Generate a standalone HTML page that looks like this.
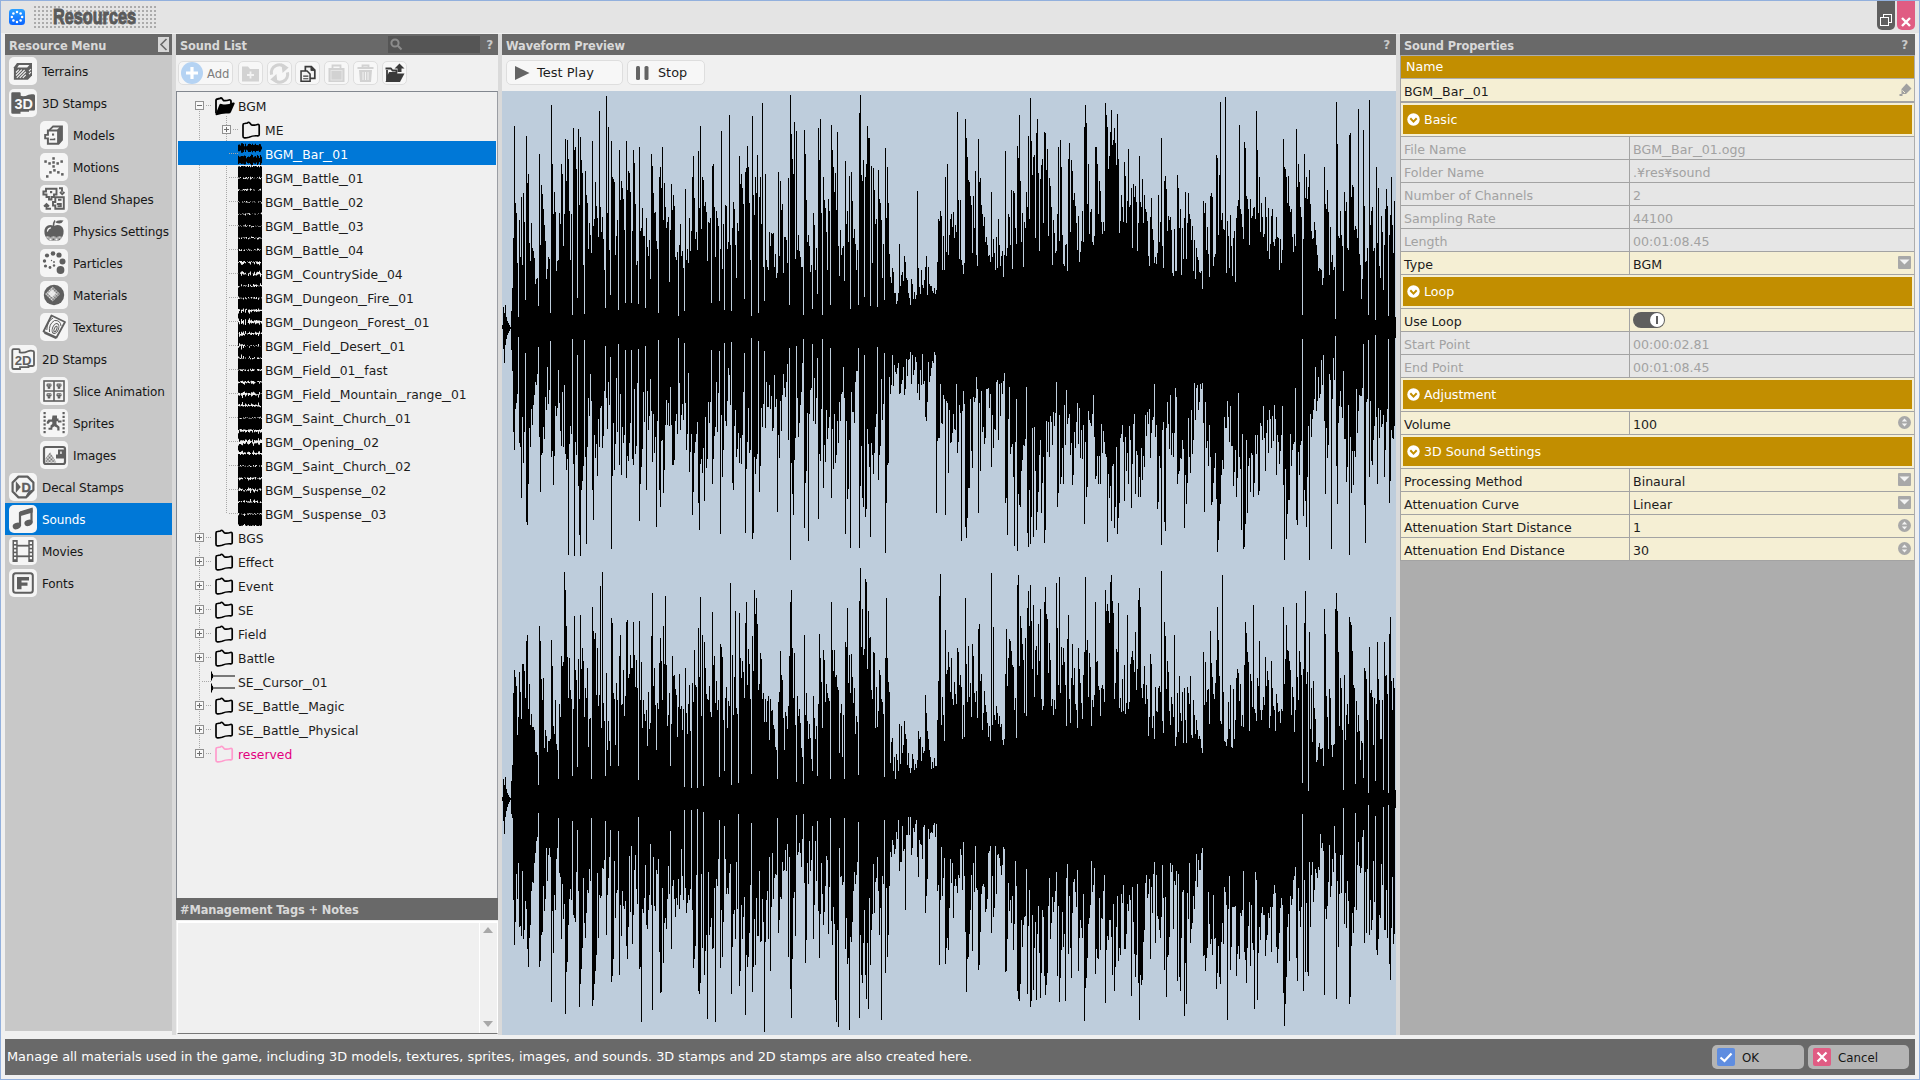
<!DOCTYPE html>
<html lang="en"><head><meta charset="utf-8"><title>Resources</title>
<style>
*{box-sizing:border-box;margin:0;padding:0}
html,body{width:1920px;height:1080px;overflow:hidden;background:#f0f0f0}
body{position:relative;font-family:"DejaVu Sans","Liberation Sans",sans-serif;font-size:12.6px;color:#1e1e1e;line-height:1}
.abs{position:absolute}
#win{position:absolute;left:0;top:0;width:1920px;height:1080px;border:1px solid #92b0dd;pointer-events:none;z-index:50}
#titlebar{position:absolute;left:1px;top:1px;width:1918px;height:32px;background:#e4e4e4}
.hdr{position:absolute;height:21px;background:#696969;color:#d9d9d9;font-weight:bold;font-size:11.4px;line-height:24px;padding-left:4px;white-space:nowrap;letter-spacing:-.1px;overflow:hidden}
u{text-decoration:none;display:inline-block;width:.72em;transform:scaleX(1.42);transform-origin:0 50%}
.hdr .q{position:absolute;right:4px;top:-1px;font-size:12px;color:#c8c8c8}
.split{position:absolute;background:#dadada}
</style>
</head><body>
<div id="titlebar"></div>
<style>
#appicon{position:absolute;left:9px;top:9px;width:16px;height:16px}
#ttl{position:absolute;left:34px;top:6px;width:123px;height:23px;background-image:radial-gradient(circle at 1px 1px,#ababab 0,#ababab 1px,rgba(171,171,171,0) 1.3px);background-size:4px 4px;background-position:0 0}
#ttl span{position:absolute;left:19px;top:-1px;font-family:"Liberation Sans","DejaVu Sans",sans-serif;font-weight:bold;font-size:21.5px;line-height:24px;color:#5a5a5a;transform:scaleX(.755);transform-origin:0 0;white-space:nowrap;-webkit-text-stroke:1px #5a5a5a;letter-spacing:0}
.wbtn{position:absolute;top:1px;height:29px;width:18px;border-radius:0 0 5px 5px}
</style>
<svg id="appicon" viewBox="0 0 16 16"><defs><linearGradient id="ag" x1="0" y1="0" x2="0" y2="1"><stop offset="0" stop-color="#2aa0ff"/><stop offset="1" stop-color="#0a64ff"/></linearGradient></defs><rect width="16" height="16" rx="3.5" fill="url(#ag)"/><g fill="#fff"><circle cx="8" cy="2.9" r="1.25"/><circle cx="11.6" cy="4.4" r="1.25"/><circle cx="13.1" cy="8" r="1.25"/><circle cx="11.6" cy="11.6" r="1.25"/><circle cx="8" cy="13.1" r="1.25"/><circle cx="4.4" cy="11.6" r="1.25"/><circle cx="2.9" cy="8" r="1.25"/><circle cx="4.4" cy="4.4" r="1.25"/></g></svg>
<div id="ttl"><span>Resources</span></div>
<div class="wbtn" style="left:1877px;background:#5f5f5f"><svg class="abs" style="left:2px;top:12px" width="14" height="14" viewBox="0 0 14 14" fill="none" stroke="#fff" stroke-width="1"><rect x="4.5" y="1.5" width="8" height="8" fill="#5f5f5f"/><rect x="1.5" y="4.5" width="8" height="8" fill="#5f5f5f"/></svg></div>
<div class="wbtn" style="left:1897px;background:#e05c83"><svg class="abs" style="left:4px;top:16px" width="10" height="10" viewBox="0 0 10 10" stroke="#fff" stroke-width="2.4"><path d="M1 1L9 9M9 1L1 9"/></svg></div>
<style>
#left{position:absolute;left:5px;top:55px;width:167px;height:976px;background:#c8c8c8}
.mi{position:absolute;left:0;width:167px;height:32px}
.mi.sel{background:#0078d7;color:#fff}
.mi .ib{position:absolute;top:2px;width:28px;height:28px;border-radius:5px;background:#f5f5f5}
.mi .ib svg{position:absolute;left:0;top:0;width:28px;height:28px}
.mi .tx{position:absolute;top:0;line-height:35px;white-space:nowrap;color:#161616;font-size:12px;letter-spacing:-.1px}
.mi.sel .tx{color:#fff}
</style>
<div class="hdr" style="left:5px;top:34px;width:167px">Resource Menu<div class="abs" style="left:153px;top:3px;width:11px;height:15px;background:#d7d7d7"><svg class="abs" style="left:0;top:0" width="11" height="15" viewBox="0 0 11 15" fill="none" stroke="#696969" stroke-width="1.6"><path d="M8.5 2L3 7.5L8.5 13"/></svg></div></div>
<div id="left">
<div class="mi" style="top:0px"><div class="ib" style="left:4px"><svg viewBox="0 0 28 28"><path d="M4.9 10.2L8 6.1H23V18.6L18.9 22.7H4.9Z" fill="#5f5f5f"/><path d="M10 8.1H20.4L18.2 10.6H8.2Z" fill="#f5f5f5"/><g stroke="#f5f5f5" stroke-width="1.1"><path d="M7 15.500l2.800-2.800M7 18.500l5.800-5.800M7.800 20.800l7.800-7.800M10.800 20.800l6-6M13.800 20.800l3-3M20 14.200l2-2.200M20 17.200l2-2.200"/></g></svg></div><span class="tx" style="left:37px">Terrains</span></div>
<div class="mi" style="top:32px"><div class="ib" style="left:4px"><svg viewBox="0 0 28 28"><path d="M2.300 4.500Q2.300 3.200 3.600 3.200H10.500Q11.700 3.200 11.700 4.400V6.800Q15 8 19.500 5.700Q21 5 24.500 5.300Q26 5.300 26 6.800V20.300Q26 21.500 24.800 21.500H20V22.700H11.500V24.800H3.600Q2.300 24.800 2.300 23.500Z" fill="#5f5f5f"/><text x="5.500" y="20.300" textLength="18.400" lengthAdjust="spacingAndGlyphs" font-family="Liberation Sans,DejaVu Sans,sans-serif" font-weight="bold" font-size="15.500" fill="#f8f8f8">3D</text></svg></div><span class="tx" style="left:37px">3D Stamps</span></div>
<div class="mi" style="top:64px"><div class="ib" style="left:35px"><svg viewBox="0 0 28 28"><path d="M8.700 8.600L12.700 4.600H22.900V19.200L18.900 23.700H6.900V18.200H4.200V13H6.900V8.600Z" fill="#5f5f5f"/><path d="M8.900 10.500H17.100V21.800H8.900V16.500H6.100V14.800H8.900Z" fill="#f5f5f5"/><path d="M11 8.600L13.400 6.400H19.300L17.100 8.600Z" fill="#f5f5f5"/><rect x="12" y="12.500" width="2.100" height="2.100" fill="#5f5f5f"/><path d="M9.800 18.500H14.500V17.200" fill="none" stroke="#5f5f5f" stroke-width="1.500"/></svg></div><span class="tx" style="left:68px">Models</span></div>
<div class="mi" style="top:96px"><div class="ib" style="left:35px"><svg viewBox="0 0 28 28"><g fill="#5f5f5f"><rect x="12.3" y="4.2" width="2.5" height="2.5"/><rect x="4.3" y="7.3" width="2.5" height="2.5"/><rect x="20.4" y="7.3" width="2.5" height="2.5"/><rect x="8.3" y="9.2" width="2.5" height="2.5"/><rect x="12.3" y="8.2" width="2.5" height="2.5"/><rect x="16.4" y="9.2" width="2.5" height="2.5"/><rect x="12.3" y="12.2" width="2.5" height="2.5"/><rect x="13.2" y="16.1" width="2.5" height="2.5"/><rect x="9.2" y="18.1" width="2.5" height="2.5"/><rect x="17.1" y="18.1" width="2.5" height="2.5"/><rect x="6.0" y="22.2" width="2.5" height="2.5"/><rect x="21.1" y="20.1" width="2.5" height="2.5"/></g></svg></div><span class="tx" style="left:68px">Motions</span></div>
<div class="mi" style="top:128px"><div class="ib" style="left:35px"><svg viewBox="0 0 28 28"><g fill="none" stroke="#5f5f5f" stroke-width="1.9" stroke-linejoin="miter"><path d="M6 3.800H16.500V9.500H14V12H11.500V14.500H9V12H6.500V9.500H3.400V6.500H6Z"/><path d="M15.300 12.200H23.800V23.700H15.300V20.500H13V17H15.300Z"/><path d="M18 14.800h3.500M16.800 19h4v2.200h-3.300"/><path d="M19 3.300h3v3.500M20 7l2.200 2.200 2.200-2.200"/><path d="M11 23.700H6.500V20.800M4 21.500L6.500 19l2.500 2.500"/></g><rect x="10" y="6" width="2.200" height="2.200" fill="#5f5f5f"/></svg></div><span class="tx" style="left:68px">Blend Shapes</span></div>
<div class="mi" style="top:160px"><div class="ib" style="left:35px"><svg viewBox="0 0 28 28"><defs><pattern id="chk" width="1.2" height="1.2" patternUnits="userSpaceOnUse"><rect width=".6" height=".6" fill="#f5f5f5"/><rect x=".6" y=".6" width=".6" height=".6" fill="#f5f5f5"/></pattern><clipPath id="apc"><path d="M14 9Q9 6.5 5.8 10Q3 14 5.5 19.5Q8 24 11.5 24Q14 23.2 16.5 24Q20 24 22.5 19.5Q25 14 22.2 10Q19 6.5 14 9Z"/></clipPath></defs><path d="M14 9Q9 6.5 5.8 10Q3 14 5.5 19.5Q8 24 11.5 24Q14 23.2 16.5 24Q20 24 22.5 19.5Q25 14 22.2 10Q19 6.5 14 9Z" fill="#5f5f5f"/><rect x="3" y="19.5" width="22" height="5" fill="url(#chk)" clip-path="url(#apc)"/><path d="M13.5 9Q13.2 6 15 3.5" fill="none" stroke="#5f5f5f" stroke-width="1.5"/><path d="M15.5 5.5Q17 2.5 23.5 3.5Q21.5 8 15.5 5.5Z" fill="#5f5f5f"/><path d="M7.5 14Q7.8 11.5 10.5 10.8" fill="none" stroke="#f5f5f5" stroke-width="1.3" stroke-linecap="round"/></svg></div><span class="tx" style="left:68px">Physics Settings</span></div>
<div class="mi" style="top:192px"><div class="ib" style="left:35px"><svg viewBox="0 0 28 28"><g fill="#5f5f5f"><circle cx="20.5" cy="21" r="3.9"/><circle cx="22.5" cy="12.5" r="3"/><circle cx="19" cy="6" r="2.6"/><circle cx="13" cy="4.5" r="2.3"/><circle cx="7" cy="6.5" r="2.1"/><circle cx="4.5" cy="12" r="1.7"/><circle cx="5.5" cy="17" r="1.6"/><circle cx="10" cy="18.5" r="1.4"/><circle cx="14" cy="16.5" r="1.2"/><circle cx="14" cy="13" r=".9"/><circle cx="11.5" cy="11.5" r=".7"/></g></svg></div><span class="tx" style="left:68px">Particles</span></div>
<div class="mi" style="top:224px"><div class="ib" style="left:35px"><svg viewBox="0 0 28 28"><defs><pattern id="chk2" width="1.4" height="1.4" patternUnits="userSpaceOnUse"><rect width=".7" height=".7" fill="#f5f5f5"/><rect x=".7" y=".7" width=".7" height=".7" fill="#f5f5f5"/></pattern></defs><circle cx="14" cy="14" r="10.200" fill="#5f5f5f"/><path d="M12.500 5.500L20 13L12.500 20.500L5 13Z" fill="url(#chk2)"/><path d="M12 8.500L16 12.500L12 16.500L8 12.500Z" fill="#f5f5f5" opacity=".85"/></svg></div><span class="tx" style="left:68px">Materials</span></div>
<div class="mi" style="top:256px"><div class="ib" style="left:35px"><svg viewBox="0 0 28 28"><g fill="none" stroke="#5f5f5f"><path d="M11.5 2.5L25 9L16.5 24.5L3.5 18.5Z" stroke-width="1.8" stroke-linejoin="round"/><path d="M4.5 19.8L16.2 25.2" stroke-width="2"/><g stroke-width="1"><ellipse cx="15.5" cy="16" rx="1.2" ry="3" transform="rotate(22 15.5 16)"/><ellipse cx="15.5" cy="15.5" rx="3" ry="5.2" transform="rotate(22 15.5 15.5)"/><path d="M9.5 19Q8.5 11 14.5 7.5Q20.5 7 21 13"/><path d="M6.8 17Q7 8.5 13 5"/></g></g></svg></div><span class="tx" style="left:68px">Textures</span></div>
<div class="mi" style="top:288px"><div class="ib" style="left:4px"><svg viewBox="0 0 28 28"><path d="M3.300 5.500Q3.300 4.200 4.600 4.200H9.500Q10.700 4.200 10.700 5.400V7.300Q14.500 8.500 19 6.200Q20.500 5.500 23.500 5.800Q25 5.800 25 7.300V19.800Q25 21 23.800 21H19.500V22.200H11V24H4.600Q3.300 24 3.300 22.700Z" fill="none" stroke="#5f5f5f" stroke-width="1.800"/><text x="5.800" y="20" textLength="16.800" lengthAdjust="spacingAndGlyphs" font-family="Liberation Sans,DejaVu Sans,sans-serif" font-weight="bold" font-size="13" fill="#5f5f5f">2D</text></svg></div><span class="tx" style="left:37px">2D Stamps</span></div>
<div class="mi" style="top:320px"><div class="ib" style="left:35px"><svg viewBox="0 0 28 28"><g fill="none" stroke="#5f5f5f" stroke-width="1.6"><rect x="4" y="4" width="20" height="20"/><path d="M14 4V24M4 14H24"/></g><g fill="#5f5f5f"><rect x="6.5" y="6.5" width="5" height="3.2" rx="1.2"/><rect x="7.7" y="9.5" width="2.6" height="2.3"/><rect x="16.5" y="6.5" width="5" height="3.2" rx="1.2"/><rect x="17.7" y="9.5" width="2.6" height="2.3"/><rect x="6.5" y="16.2" width="5" height="3.2" rx="1.2"/><rect x="7.7" y="19.2" width="2.6" height="2.3"/><rect x="16.5" y="16.2" width="5" height="3.2" rx="1.2"/><rect x="17.7" y="19.2" width="2.6" height="2.3"/></g><g fill="#f5f5f5"><rect x="7.7" y="7.5" width="0.9" height="0.9"/><rect x="9.7" y="7.5" width="0.9" height="0.9"/><rect x="17.7" y="7.5" width="0.9" height="0.9"/><rect x="19.7" y="7.5" width="0.9" height="0.9"/><rect x="7.7" y="17.2" width="0.9" height="0.9"/><rect x="9.7" y="17.2" width="0.9" height="0.9"/><rect x="17.7" y="17.2" width="0.9" height="0.9"/><rect x="19.7" y="17.2" width="0.9" height="0.9"/></g></svg></div><span class="tx" style="left:68px">Slice Animation</span></div>
<div class="mi" style="top:352px"><div class="ib" style="left:35px"><svg viewBox="0 0 28 28"><g fill="#5f5f5f"><rect x="3.5" y="3" width="2.2" height="2.2"/><rect x="3.5" y="6.8" width="2.2" height="2.2"/><rect x="3.5" y="10.6" width="2.2" height="2.2"/><rect x="3.5" y="14.4" width="2.2" height="2.2"/><rect x="3.5" y="18.2" width="2.2" height="2.2"/><rect x="3.5" y="22" width="2.2" height="2.2"/><rect x="22.5" y="3" width="2.2" height="2.2"/><rect x="22.5" y="6.8" width="2.2" height="2.2"/><rect x="22.5" y="10.6" width="2.2" height="2.2"/><rect x="22.5" y="14.4" width="2.2" height="2.2"/><rect x="22.5" y="18.2" width="2.2" height="2.2"/><rect x="22.5" y="22" width="2.2" height="2.2"/></g><path d="M12.5 6.5h4.5v3h1.5v2h3v2h-3.5v-1.2h-1.5v3l3 2.5v3.7h-2.2v-2.7l-3-1.5-2 1.5v2h-3.8v-2h2v-2.2l1.8-1.6v-2.2h-2.2l-1.5 2h-1.8v-2l1.6-2.2h3.5z" fill="#5f5f5f"/></svg></div><span class="tx" style="left:68px">Sprites</span></div>
<div class="mi" style="top:384px"><div class="ib" style="left:35px"><svg viewBox="0 0 28 28"><defs><pattern id="chk3" width="1.4" height="1.4" patternUnits="userSpaceOnUse"><rect width=".7" height=".7" fill="#5f5f5f"/><rect x=".7" y=".7" width=".7" height=".7" fill="#5f5f5f"/></pattern></defs><rect x="4" y="6" width="21" height="17" rx="2" fill="none" stroke="#5f5f5f" stroke-width="2.2"/><path d="M5.5 21.5V17.5L10 11L16.5 21.5Z" fill="url(#chk3)"/><path d="M18 8.5h6v9h-8v-4h2z" fill="#5f5f5f"/><rect x="20.2" y="10.5" width="1.5" height="2.4" fill="#f5f5f5"/></svg></div><span class="tx" style="left:68px">Images</span></div>
<div class="mi" style="top:416px"><div class="ib" style="left:4px"><svg viewBox="0 0 28 28"><path d="M9.500 3.600H18.500L24.400 9.500V17L17 24.400H9.500L3.600 18.500V9.500Z" fill="none" stroke="#5f5f5f" stroke-width="2.200" stroke-linejoin="round"/><path d="M24 17.500Q19.500 18 18 23.800" fill="none" stroke="#5f5f5f" stroke-width="2.200"/><path d="M6.800 8L11.800 14L6.800 20Z" fill="#5f5f5f"/><text x="17.200" y="18.600" text-anchor="middle" font-family="Liberation Sans,DejaVu Sans,sans-serif" font-weight="bold" font-size="13" fill="#5f5f5f" stroke="#5f5f5f" stroke-width=".4">D</text></svg></div><span class="tx" style="left:37px">Decal Stamps</span></div>
<div class="mi sel" style="top:448px"><div class="ib" style="left:4px"><svg viewBox="0 0 28 28"><path d="M11 7.5L22.5 4V17.5" fill="none" stroke="#5f5f5f" stroke-width="2.2"/><path d="M11 7.5V21" stroke="#5f5f5f" stroke-width="2.2" fill="none"/><path d="M10 7.2L23.6 3.2V7.6L10 11.6Z" fill="#5f5f5f"/><ellipse cx="7.8" cy="21" rx="4.2" ry="3.1" transform="rotate(-20 7.8 21)" fill="#5f5f5f"/><ellipse cx="19.5" cy="17.8" rx="4.2" ry="3.1" transform="rotate(-20 19.5 17.8)" fill="#5f5f5f"/></svg></div><span class="tx" style="left:37px">Sounds</span></div>
<div class="mi" style="top:480px"><div class="ib" style="left:4px"><svg viewBox="0 0 28 28"><g fill="#5f5f5f"><rect x="3.5" y="3" width="5.2" height="22"/><rect x="19.3" y="3" width="5.2" height="22"/><rect x="8" y="7.8" width="12" height="1.8"/><rect x="8" y="18.4" width="12" height="1.8"/></g><g fill="#f5f5f5"><rect x="5" y="4.8" width="2.2" height="2.2"/><rect x="5" y="8.6" width="2.2" height="2.2"/><rect x="5" y="12.4" width="2.2" height="2.2"/><rect x="5" y="16.2" width="2.2" height="2.2"/><rect x="5" y="20" width="2.2" height="2.2"/><rect x="20.8" y="4.8" width="2.2" height="2.2"/><rect x="20.8" y="8.6" width="2.2" height="2.2"/><rect x="20.8" y="12.4" width="2.2" height="2.2"/><rect x="20.8" y="16.2" width="2.2" height="2.2"/><rect x="20.8" y="20" width="2.2" height="2.2"/></g></svg></div><span class="tx" style="left:37px">Movies</span></div>
<div class="mi" style="top:512px"><div class="ib" style="left:4px"><svg viewBox="0 0 28 28"><rect x="4.2" y="4.2" width="19.6" height="19.6" rx="2.5" fill="none" stroke="#5f5f5f" stroke-width="2"/><path d="M8 8h12v3.4h-7.5v2.2h6v3.2h-6v3.4H8z" fill="#5f5f5f"/></svg></div><span class="tx" style="left:37px">Fonts</span></div>
</div>
<style>
.tbtn{position:absolute;top:61px;height:24px;background:#f7f7f7;border:1px solid #dedede;border-radius:5px}
.tbtn svg{position:absolute;left:-1px;top:-1px;width:25px;height:25px}
#tree{position:absolute;left:176px;top:91px;width:322px;height:808px;border:1px solid #82878f;border-right-color:#9a9da3;background:#f0f0f0;overflow:hidden}
.tr{position:absolute;left:1px;width:318px;height:24px;line-height:28px;white-space:nowrap;color:#1c1c1c;font-size:12.35px}
.tr.sel{background:#0078d7;color:#fff}
.tr .t{position:absolute;top:0}
.tr svg{position:absolute;top:0}
.eb{position:absolute;width:9px;height:9px;border:1px solid #919191;background:#f8f8f8}
.eb:before{content:"";position:absolute;left:1px;top:3px;width:5px;height:1px;background:#6e6e6e}
.eb.p:after{content:"";position:absolute;left:3px;top:1px;width:1px;height:5px;background:#6e6e6e}
.vd{position:absolute;width:1px;background-image:linear-gradient(#a8a8a8 50%,rgba(0,0,0,0) 50%);background-size:1px 2px}
.hd{position:absolute;height:1px;background-image:linear-gradient(90deg,#a8a8a8 50%,rgba(0,0,0,0) 50%);background-size:2px 1px}
</style>
<div class="split" style="left:172px;top:34px;width:4px;height:1001px"></div>
<div class="hdr" style="left:176px;top:34px;width:322px">Sound List<div class="abs" style="left:212px;top:2px;width:92px;height:17px;background:#555"><svg class="abs" style="left:1px;top:1px" width="14" height="14" viewBox="0 0 14 14" fill="none" stroke="#8c8c8c" stroke-width="2"><circle cx="6" cy="6" r="3.600"/><path d="M8.800 8.800L12.500 12.500"/></svg></div><span class="q" style="right:5px">?</span></div>
<div class="tbtn" style="left:178px;width:55px"><svg style="left:2px;top:0;width:22px;height:22px" viewBox="0 0 22 22"><circle cx="11" cy="11" r="11" fill="#b5d3f3"/><path d="M11 5v12M5 11h12" stroke="#fff" stroke-width="3.200"/></svg><span class="abs" style="left:28px;top:0;line-height:24px;color:#7d7d7d;font-size:11.6px">Add</span></div>
<div class="tbtn" style="left:238px;width:25px"><svg viewBox="0 0 25 25"><path d="M4 5.5h6l2 2.5h9v12.5H4z" fill="#d2d2d2"/><path d="M12.5 10.5v7M9 14h7" stroke="#f3f3f3" stroke-width="1.8"/></svg></div>
<div class="tbtn" style="left:267px;width:25px"><svg viewBox="0 0 25 25"><g transform="translate(12.5 12.5) scale(1.22) translate(-12.5 -12.5)"><g fill="none" stroke="#d2d2d2" stroke-width="2.6"><path d="M6 13.5A6.5 6.5 0 0 1 17.5 8"/><path d="M19 11.5A6.5 6.5 0 0 1 7.5 17"/></g><path d="M14 4l6 3.500-5 4.500z" fill="#d2d2d2"/><path d="M11 21l-6-3.500 5-4.500z" fill="#d2d2d2"/></g></svg></div>
<div class="tbtn" style="left:295px;width:25px"><svg viewBox="0 0 25 25"><g transform="translate(12.5 12.8) scale(.86) translate(-12.5 -12.8)"><path d="M10 4.500h7l4 4v9.500h-11z" fill="#f3f3f3" stroke="#3a3a3a" stroke-width="2"/><path d="M16.500 4.500v4.500h4.500" fill="#3a3a3a" stroke="#3a3a3a" stroke-width="1"/><path d="M5 9.500h7l3.500 3.500v8.500H5z" fill="#f3f3f3" stroke="#3a3a3a" stroke-width="1.800"/><path d="M7.500 15.500h6M7.500 18.500h6" stroke="#3a3a3a" stroke-width="1.300"/></g></svg></div>
<div class="tbtn" style="left:324px;width:25px"><svg viewBox="0 0 25 25"><rect x="4.500" y="7" width="16" height="14" fill="#d2d2d2"/><rect x="7" y="9.500" width="11" height="9.500" fill="none" stroke="#e6e6e6" stroke-width="1"/><path d="M8.500 7V4.500h8V7" fill="none" stroke="#d2d2d2" stroke-width="1.800"/></svg></div>
<div class="tbtn" style="left:353px;width:25px"><svg viewBox="0 0 25 25"><path d="M4.500 7h16M9.500 7V4.500h6V7" fill="none" stroke="#d2d2d2" stroke-width="1.800"/><path d="M6 9h13l-1 12H7z" fill="#d2d2d2"/><path d="M10 11v8M12.500 11v8M15 11v8" stroke="#f3f3f3" stroke-width="1"/></svg></div>
<div class="tbtn" style="left:382px;width:25px"><svg viewBox="0 0 25 25"><path d="M3.500 7.500h5.500l1.500 2h4v2.500H7.500L5 19V9" fill="none" stroke="#3a3a3a" stroke-width="1.800" stroke-linejoin="round"/><path d="M3.500 21L7 12.500h15.500L18 21z" fill="#3a3a3a"/><path d="M17.500 2.500l5 5h-3v3.500h-4V7.500h-3z" fill="#3a3a3a"/></svg></div>
<div id="tree">
<div class="vd" style="left:22px;top:19px;height:643px"></div><div class="vd" style="left:49px;top:24px;height:398px"></div><div class="tr" style="top:1px"><div class="hd" style="left:28px;top:12px;width:6px"></div><div class="eb" style="left:17px;top:8px"></div><svg style="left:36px;top:3px" width="22" height="20" viewBox="0 0 22 20"><path d="M2 17.500V4.500Q2 3 3.500 3L6 2.500Q7 1.500 8 2.500L9.500 4.500Q12 5 15 4Q17 3.500 17 5.500V8" fill="none" stroke="#000" stroke-width="1.800"/><path d="M1.500 18.500L5.500 8.500Q6 7.500 7.500 8Q13 9.500 19 6.500Q21.500 6 20.500 8L17 16Q16.500 17.500 14.500 17.500Q8 17 3.500 19Q1.500 19.500 1.500 18.500Z" fill="#000"/></svg><span class="t" style="left:60px">BGM</span></div>
<div class="tr" style="top:25px"><div class="hd" style="left:55px;top:12px;width:6px"></div><div class="eb p" style="left:44px;top:8px"></div><svg style="left:63px;top:3px" width="20" height="20" viewBox="0 0 20 20"><path d="M2 5Q2 3.500 3.500 3.500L6.500 3Q7.500 1.500 8.800 3L10.500 5Q13.500 5.500 16.500 4.500Q18.200 4 18.200 6V14.500Q18.200 16 16.500 15.800Q12 15.500 8 17.200Q4.500 18.300 3 17.800Q2 17.500 2 16Z" fill="none" stroke="#000" stroke-width="1.700"/></svg><span class="t" style="left:87px">ME</span></div>
<div class="tr sel" style="top:49px"><div class="hd" style="left:51px;top:12px;width:10px"></div><svg style="left:60px;top:1px" width="24" height="24" viewBox="0 0 24 24"><path d="M0.5 2.7v6.6M0.5 13.8v8.3M1.5 2.6v6.7M1.5 14.7v6.5M2.5 3.4v5.2M2.5 14.6v6.7M3.5 1.2v9.6M3.5 13.9v8.1M4.5 1.3v9.5M4.5 14.1v7.7M5.5 2.0v8.1M5.5 14.2v7.6M6.5 4.2v3.5M6.5 13.5v9.1M7.5 1.8v8.3M7.5 13.9v8.3M8.5 4.3v3.5M8.5 16.3v3.4M9.5 3.4v5.2M9.5 14.9v6.2M10.5 2.1v7.9M10.5 14.5v7.1M11.5 1.8v8.3M11.5 15.1v5.8M12.5 2.1v7.9M12.5 14.0v8.1M13.5 3.1v5.7M13.5 12.5v11.0M14.5 1.8v8.4M14.5 13.1v9.8M15.5 3.1v5.8M15.5 15.2v5.6M16.5 2.8v6.4M16.5 14.5v7.0M17.5 1.7v8.6M17.5 14.1v7.7M18.5 2.9v6.2M18.5 15.5v5.1M19.5 3.0v6.1M19.5 13.1v9.9M20.5 3.3v5.4M20.5 14.1v7.7M21.5 1.9v8.1M21.5 16.0v3.9M22.5 2.3v7.3M22.5 13.0v10.1M23.5 4.6v2.8M23.5 14.8v6.5" stroke="#000" stroke-width="1.05" fill="none"/></svg><span class="t" style="left:87px">BGM<u>_</u>Bar<u>_</u>01</span></div>
<div class="tr" style="top:73px"><div class="hd" style="left:51px;top:12px;width:10px"></div><svg style="left:60px;top:1px" width="24" height="24" viewBox="0 0 24 24"><path d="M0.5 0.4v11.1M0.5 12.8v10.5M1.5 0.2v11.6M1.5 12.4v11.1M2.5 1.1v9.9M2.5 12.0v11.9M3.5 0.1v11.8M3.5 12.0v12.1M4.5 -0.2v12.4M4.5 12.2v11.5M5.5 0.3v11.3M5.5 13.0v10.0M6.5 0.1v11.8M6.5 12.7v10.6M7.5 0.6v10.8M7.5 13.0v10.1M8.5 0.8v10.3M8.5 12.6v10.7M9.5 -0.2v12.4M9.5 13.3v9.4M10.5 1.1v9.9M10.5 12.3v11.4M11.5 -0.2v12.4M11.5 12.1v11.7M12.5 1.3v9.5M12.5 13.5v8.9M13.5 0.2v11.5M13.5 12.7v10.5M14.5 0.9v10.2M14.5 12.0v12.1M15.5 -0.1v12.2M15.5 12.3v11.3M16.5 0.3v11.4M16.5 12.2v11.6M17.5 -0.2v12.4M17.5 12.1v11.8M18.5 0.2v11.7M18.5 12.2v11.7M19.5 1.1v9.8M19.5 11.8v12.4M20.5 -0.0v12.1M20.5 12.2v11.7M21.5 1.3v9.4M21.5 12.7v10.6M22.5 0.0v12.0M22.5 13.2v9.6M23.5 0.5v11.0M23.5 11.9v12.1" stroke="#000" stroke-width="1.05" fill="none"/></svg><span class="t" style="left:87px">BGM<u>_</u>Battle<u>_</u>01</span></div>
<div class="tr" style="top:97px"><div class="hd" style="left:51px;top:12px;width:10px"></div><svg style="left:60px;top:1px" width="24" height="24" viewBox="0 0 24 24"><path d="M0.5 0.9v10.2M0.5 11.8v12.4M1.5 0.1v11.9M1.5 12.4v11.3M2.5 0.2v11.7M2.5 12.0v12.0M3.5 0.2v11.5M3.5 11.8v12.4M4.5 0.6v10.8M4.5 12.5v11.0M5.5 -0.2v12.3M5.5 12.3v11.4M6.5 0.7v10.6M6.5 11.9v12.3M7.5 -0.2v12.4M7.5 12.5v11.0M8.5 0.9v10.2M8.5 12.4v11.3M9.5 0.4v11.3M9.5 12.4v11.1M10.5 -0.2v12.4M10.5 12.8v10.5M11.5 -0.2v12.4M11.5 12.9v10.3M12.5 0.7v10.7M12.5 12.0v12.0M13.5 -0.2v12.4M13.5 11.9v12.2M14.5 0.1v11.7M14.5 12.2v11.5M15.5 0.2v11.5M15.5 12.0v11.9M16.5 0.4v11.2M16.5 12.2v11.6M17.5 0.0v11.9M17.5 12.3v11.4M18.5 -0.0v12.1M18.5 12.0v11.9M19.5 -0.2v12.4M19.5 12.2v11.7M20.5 0.5v11.0M20.5 12.5v11.1M21.5 0.3v11.4M21.5 11.9v12.2M22.5 0.5v11.1M22.5 12.1v11.7M23.5 -0.2v12.4M23.5 13.5v9.1" stroke="#000" stroke-width="1.05" fill="none"/></svg><span class="t" style="left:87px">BGM<u>_</u>Battle<u>_</u>02</span></div>
<div class="tr" style="top:121px"><div class="hd" style="left:51px;top:12px;width:10px"></div><svg style="left:60px;top:1px" width="24" height="24" viewBox="0 0 24 24"><path d="M0.5 0.8v10.4M0.5 12.2v11.6M1.5 0.1v11.8M1.5 12.2v11.6M2.5 0.5v11.0M2.5 12.0v12.0M3.5 0.2v11.7M3.5 12.5v10.9M4.5 -0.2v12.4M4.5 12.1v11.7M5.5 0.5v10.9M5.5 12.3v11.3M6.5 0.4v11.2M6.5 12.3v11.3M7.5 1.5v8.9M7.5 12.5v11.0M8.5 -0.2v12.3M8.5 12.8v10.3M9.5 0.3v11.3M9.5 11.9v12.3M10.5 -0.1v12.2M10.5 11.8v12.4M11.5 1.1v9.9M11.5 12.5v11.1M12.5 0.5v11.1M12.5 12.0v12.0M13.5 -0.2v12.4M13.5 13.5v9.0M14.5 -0.2v12.4M14.5 13.0v10.1M15.5 -0.0v12.0M15.5 13.0v10.1M16.5 0.2v11.6M16.5 11.8v12.4M17.5 0.4v11.3M17.5 12.2v11.6M18.5 -0.1v12.1M18.5 12.2v11.5M19.5 0.3v11.3M19.5 11.8v12.4M20.5 -0.2v12.3M20.5 12.4v11.1M21.5 -0.2v12.4M21.5 12.8v10.4M22.5 -0.1v12.2M22.5 12.4v11.2M23.5 0.2v11.5M23.5 12.0v12.0" stroke="#000" stroke-width="1.05" fill="none"/></svg><span class="t" style="left:87px">BGM<u>_</u>Battle<u>_</u>03</span></div>
<div class="tr" style="top:145px"><div class="hd" style="left:51px;top:12px;width:10px"></div><svg style="left:60px;top:1px" width="24" height="24" viewBox="0 0 24 24"><path d="M0.5 0.3v11.4M0.5 12.1v11.8M1.5 1.1v9.8M1.5 13.1v9.8M2.5 0.1v11.8M2.5 12.8v10.3M3.5 0.9v10.3M3.5 13.1v9.9M4.5 -0.2v12.3M4.5 12.1v11.9M5.5 -0.2v12.4M5.5 12.8v10.4M6.5 0.4v11.2M6.5 12.9v10.2M7.5 0.1v11.9M7.5 11.8v12.4M8.5 0.8v10.4M8.5 11.8v12.4M9.5 -0.0v12.1M9.5 12.5v11.0M10.5 1.3v9.4M10.5 11.8v12.4M11.5 0.4v11.1M11.5 12.7v10.7M12.5 0.2v11.6M12.5 12.2v11.6M13.5 -0.2v12.4M13.5 12.9v10.3M14.5 -0.1v12.2M14.5 11.8v12.4M15.5 -0.2v12.4M15.5 12.5v11.0M16.5 0.7v10.5M16.5 11.9v12.1M17.5 0.3v11.3M17.5 12.3v11.3M18.5 -0.2v12.4M18.5 12.5v11.0M19.5 1.4v9.1M19.5 12.6v10.9M20.5 1.2v9.5M20.5 12.0v11.9M21.5 0.3v11.5M21.5 12.7v10.6M22.5 0.4v11.2M22.5 12.0v11.9M23.5 0.4v11.3M23.5 11.8v12.4" stroke="#000" stroke-width="1.05" fill="none"/></svg><span class="t" style="left:87px">BGM<u>_</u>Battle<u>_</u>04</span></div>
<div class="tr" style="top:169px"><div class="hd" style="left:51px;top:12px;width:10px"></div><svg style="left:60px;top:1px" width="24" height="24" viewBox="0 0 24 24"><path d="M0.5 0.7v10.7M0.5 11.8v12.4M1.5 -0.2v12.4M1.5 11.8v12.4M2.5 1.3v9.3M2.5 11.8v12.4M3.5 2.7v6.7M3.5 13.8v8.4M4.5 2.8v6.5M4.5 11.8v12.4M5.5 2.0v8.1M5.5 12.6v10.8M6.5 0.8v10.4M6.5 12.6v10.7M7.5 1.3v9.5M7.5 12.3v11.3M8.5 -0.2v12.4M8.5 12.6v10.9M9.5 0.0v12.0M9.5 11.8v12.4M10.5 0.8v10.4M10.5 14.0v8.0M11.5 1.2v9.6M11.5 11.8v12.4M12.5 2.4v7.2M12.5 13.3v9.5M13.5 -0.2v12.4M13.5 11.8v12.4M14.5 0.6v10.8M14.5 11.8v12.4M15.5 0.4v11.2M15.5 13.9v8.2M16.5 2.3v7.4M16.5 13.3v9.4M17.5 -0.2v12.4M17.5 13.2v9.6M18.5 1.6v8.8M18.5 13.4v9.1M19.5 2.3v7.4M19.5 12.7v10.5M20.5 1.9v8.2M20.5 12.2v11.6M21.5 3.2v5.6M21.5 12.2v11.5M22.5 1.3v9.4M22.5 14.7v6.5M23.5 -0.2v12.4M23.5 12.9v10.2" stroke="#000" stroke-width="1.05" fill="none"/></svg><span class="t" style="left:87px">BGM<u>_</u>CountrySide<u>_</u>04</span></div>
<div class="tr" style="top:193px"><div class="hd" style="left:51px;top:12px;width:10px"></div><svg style="left:60px;top:1px" width="24" height="24" viewBox="0 0 24 24"><path d="M0.5 1.5v9.0M0.5 12.9v10.2M1.5 0.4v11.3M1.5 12.7v10.6M2.5 0.1v11.7M2.5 12.2v11.7M3.5 0.2v11.6M3.5 12.4v11.3M4.5 -0.1v12.2M4.5 12.2v11.6M5.5 0.3v11.4M5.5 13.4v9.1M6.5 0.1v11.8M6.5 11.9v12.2M7.5 0.6v10.7M7.5 12.7v10.6M8.5 -0.2v12.4M8.5 13.3v9.4M9.5 0.3v11.4M9.5 11.8v12.4M10.5 0.9v10.2M10.5 12.2v11.6M11.5 -0.2v12.4M11.5 12.6v10.9M12.5 0.2v11.5M12.5 12.1v11.8M13.5 0.9v10.2M13.5 12.5v10.9M14.5 0.4v11.3M14.5 12.1v11.7M15.5 0.5v11.0M15.5 12.6v10.8M16.5 1.0v10.1M16.5 12.7v10.7M17.5 0.1v11.8M17.5 12.5v11.1M18.5 0.9v10.2M18.5 12.9v10.2M19.5 -0.2v12.4M19.5 12.0v12.0M20.5 0.2v11.6M20.5 13.7v8.7M21.5 0.2v11.6M21.5 12.3v11.4M22.5 -0.2v12.4M22.5 12.3v11.4M23.5 0.5v10.9M23.5 12.3v11.5" stroke="#000" stroke-width="1.05" fill="none"/></svg><span class="t" style="left:87px">BGM<u>_</u>Dungeon<u>_</u>Fire<u>_</u>01</span></div>
<div class="tr" style="top:217px"><div class="hd" style="left:51px;top:12px;width:10px"></div><svg style="left:60px;top:1px" width="24" height="24" viewBox="0 0 24 24"><path d="M0.5 3.5v4.9M0.5 12.3v11.5M1.5 1.0v9.9M1.5 14.2v7.7M2.5 -0.1v12.1M2.5 11.8v12.4M3.5 2.9v6.1M3.5 14.1v7.7M4.5 1.1v9.8M4.5 13.2v9.6M5.5 1.8v8.3M5.5 14.5v7.1M6.5 -0.2v12.4M6.5 12.3v11.5M7.5 2.7v6.6M7.5 14.9v6.2M8.5 -0.2v12.4M8.5 12.3v11.4M9.5 -0.2v12.4M9.5 12.5v11.0M10.5 2.4v7.3M10.5 13.1v9.8M11.5 3.8v4.4M11.5 14.2v7.6M12.5 1.5v9.1M12.5 12.8v10.4M13.5 2.2v7.6M13.5 13.5v8.9M14.5 0.9v10.2M14.5 13.0v10.0M15.5 0.7v10.6M15.5 13.2v9.7M16.5 1.8v8.5M16.5 12.5v10.9M17.5 1.3v9.3M17.5 14.3v7.4M18.5 2.1v7.8M18.5 13.4v9.2M19.5 1.5v9.0M19.5 13.2v9.5M20.5 1.4v9.2M20.5 13.2v9.6M21.5 1.5v8.9M21.5 14.8v6.4M22.5 0.9v10.1M22.5 12.2v11.5M23.5 0.9v10.2M23.5 13.6v8.8" stroke="#000" stroke-width="1.05" fill="none"/></svg><span class="t" style="left:87px">BGM<u>_</u>Dungeon<u>_</u>Forest<u>_</u>01</span></div>
<div class="tr" style="top:241px"><div class="hd" style="left:51px;top:12px;width:10px"></div><svg style="left:60px;top:1px" width="24" height="24" viewBox="0 0 24 24"><path d="M0.5 0.1v11.8M0.5 13.7v8.7M1.5 2.7v6.6M1.5 12.5v10.9M2.5 1.6v8.8M2.5 11.8v12.4M3.5 1.8v8.4M3.5 15.5v5.0M4.5 1.7v8.5M4.5 11.8v12.4M5.5 1.0v10.0M5.5 14.1v7.8M6.5 1.4v9.1M6.5 12.0v11.9M7.5 0.1v11.9M7.5 12.4v11.2M8.5 -0.2v12.4M8.5 11.8v12.4M9.5 0.6v10.8M9.5 11.9v12.1M10.5 -0.2v12.4M10.5 11.8v12.4M11.5 -0.2v12.4M11.5 13.8v8.4M12.5 0.8v10.5M12.5 11.8v12.4M13.5 0.9v10.1M13.5 11.8v12.4M14.5 -0.1v12.1M14.5 11.8v12.4M15.5 0.8v10.3M15.5 11.8v12.4M16.5 -0.2v12.4M16.5 12.8v10.3M17.5 0.5v11.0M17.5 11.8v12.4M18.5 1.0v10.0M18.5 11.8v12.4M19.5 -0.2v12.4M19.5 12.6v10.8M20.5 1.9v8.2M20.5 12.4v11.2M21.5 0.2v11.6M21.5 11.8v12.4M22.5 -0.2v12.4M22.5 12.6v10.9M23.5 -0.2v12.4M23.5 12.0v12.0" stroke="#000" stroke-width="1.05" fill="none"/></svg><span class="t" style="left:87px">BGM<u>_</u>Field<u>_</u>Desert<u>_</u>01</span></div>
<div class="tr" style="top:265px"><div class="hd" style="left:51px;top:12px;width:10px"></div><svg style="left:60px;top:1px" width="24" height="24" viewBox="0 0 24 24"><path d="M0.5 0.3v11.4M0.5 12.4v11.2M1.5 0.5v11.0M1.5 12.1v11.8M2.5 0.9v10.3M2.5 12.7v10.6M3.5 0.4v11.2M3.5 13.1v9.9M4.5 0.6v10.8M4.5 13.3v9.4M5.5 0.7v10.6M5.5 12.1v11.7M6.5 0.1v11.7M6.5 12.4v11.2M7.5 0.5v11.0M7.5 13.0v9.9M8.5 -0.2v12.4M8.5 12.2v11.7M9.5 -0.1v12.2M9.5 12.8v10.4M10.5 0.5v11.0M10.5 13.2v9.6M11.5 0.0v11.9M11.5 12.0v12.0M12.5 1.3v9.5M12.5 12.4v11.2M13.5 0.1v11.8M13.5 13.2v9.6M14.5 1.2v9.6M14.5 12.9v10.2M15.5 0.7v10.6M15.5 13.0v9.9M16.5 0.4v11.2M16.5 12.3v11.4M17.5 0.1v11.8M17.5 12.1v11.8M18.5 -0.2v12.4M18.5 11.9v12.2M19.5 1.0v10.0M19.5 12.6v10.7M20.5 0.9v10.2M20.5 12.9v10.2M21.5 0.4v11.1M21.5 12.4v11.2M22.5 0.2v11.6M22.5 13.1v9.8M23.5 1.0v10.1M23.5 12.4v11.2" stroke="#000" stroke-width="1.05" fill="none"/></svg><span class="t" style="left:87px">BGM<u>_</u>Field<u>_</u>01<u>_</u>fast</span></div>
<div class="tr" style="top:289px"><div class="hd" style="left:51px;top:12px;width:10px"></div><svg style="left:60px;top:1px" width="24" height="24" viewBox="0 0 24 24"><path d="M0.5 1.2v9.6M0.5 13.3v9.3M1.5 1.1v9.9M1.5 13.8v8.3M2.5 0.2v11.5M2.5 12.6v10.8M3.5 1.1v9.8M3.5 13.7v8.5M4.5 1.2v9.6M4.5 16.0v4.0M5.5 2.1v7.8M5.5 13.0v10.1M6.5 2.7v6.7M6.5 12.8v10.4M7.5 0.8v10.3M7.5 14.5v7.0M8.5 1.3v9.4M8.5 13.3v9.3M9.5 0.5v11.0M9.5 12.3v11.3M10.5 1.0v9.9M10.5 13.9v8.1M11.5 1.2v9.7M11.5 13.1v9.9M12.5 0.2v11.6M12.5 12.7v10.6M13.5 1.8v8.4M13.5 14.5v7.0M14.5 1.4v9.2M14.5 13.8v8.4M15.5 2.2v7.6M15.5 13.1v9.7M16.5 1.5v8.9M16.5 12.9v10.2M17.5 0.4v11.2M17.5 13.5v9.1M18.5 -0.2v12.4M18.5 13.4v9.3M19.5 -0.2v12.4M19.5 12.9v10.3M20.5 -0.2v12.4M20.5 15.6v4.8M21.5 1.8v8.3M21.5 12.7v10.5M22.5 0.3v11.3M22.5 11.8v12.4M23.5 0.6v10.7M23.5 11.8v12.4" stroke="#000" stroke-width="1.05" fill="none"/></svg><span class="t" style="left:87px">BGM<u>_</u>Field<u>_</u>Mountain<u>_</u>range<u>_</u>01</span></div>
<div class="tr" style="top:313px"><div class="hd" style="left:51px;top:12px;width:10px"></div><svg style="left:60px;top:1px" width="24" height="24" viewBox="0 0 24 24"><path d="M0.5 0.1v11.9M0.5 12.0v12.1M1.5 0.2v11.7M1.5 12.5v11.1M2.5 0.2v11.7M2.5 12.9v10.2M3.5 -0.1v12.3M3.5 12.9v10.3M4.5 0.3v11.4M4.5 11.8v12.4M5.5 0.5v11.0M5.5 12.4v11.2M6.5 -0.1v12.2M6.5 12.4v11.2M7.5 0.8v10.5M7.5 12.3v11.4M8.5 0.1v11.7M8.5 12.1v11.8M9.5 0.7v10.5M9.5 11.8v12.4M10.5 -0.2v12.4M10.5 12.4v11.2M11.5 0.3v11.4M11.5 12.6v10.8M12.5 -0.2v12.4M12.5 12.7v10.6M13.5 0.1v11.8M13.5 12.6v10.8M14.5 0.7v10.6M14.5 12.1v11.8M15.5 -0.2v12.4M15.5 12.4v11.2M16.5 0.7v10.6M16.5 12.0v11.9M17.5 0.4v11.2M17.5 12.3v11.5M18.5 -0.2v12.4M18.5 11.9v12.2M19.5 0.6v10.7M19.5 11.8v12.4M20.5 0.4v11.2M20.5 12.0v11.9M21.5 0.7v10.6M21.5 12.4v11.2M22.5 1.2v9.6M22.5 11.8v12.4M23.5 -0.2v12.4M23.5 12.9v10.1" stroke="#000" stroke-width="1.05" fill="none"/></svg><span class="t" style="left:87px">BGM<u>_</u>Saint<u>_</u>Church<u>_</u>01</span></div>
<div class="tr" style="top:337px"><div class="hd" style="left:51px;top:12px;width:10px"></div><svg style="left:60px;top:1px" width="24" height="24" viewBox="0 0 24 24"><path d="M0.5 3.3v5.5M0.5 15.4v5.2M1.5 0.3v11.4M1.5 14.1v7.8M2.5 1.7v8.7M2.5 13.9v8.1M3.5 1.7v8.5M3.5 14.8v6.4M4.5 1.6v8.9M4.5 15.2v5.6M5.5 1.7v8.6M5.5 13.3v9.5M6.5 1.1v9.8M6.5 13.9v8.3M7.5 2.6v6.8M7.5 13.4v9.2M8.5 2.1v7.7M8.5 11.9v12.2M9.5 0.8v10.5M9.5 13.7v8.5M10.5 2.1v7.8M10.5 14.4v7.3M11.5 2.6v6.7M11.5 14.0v8.0M12.5 1.3v9.4M12.5 13.0v9.9M13.5 1.0v10.1M13.5 11.8v12.4M14.5 2.4v7.2M14.5 13.6v8.8M15.5 -0.2v12.4M15.5 15.7v4.7M16.5 2.2v7.7M16.5 13.4v9.2M17.5 1.4v9.1M17.5 13.2v9.7M18.5 1.9v8.3M18.5 13.2v9.6M19.5 1.5v8.9M19.5 12.8v10.5M20.5 3.7v4.6M20.5 14.6v6.9M21.5 1.6v8.8M21.5 14.7v6.5M22.5 2.7v6.5M22.5 12.9v10.2M23.5 2.3v7.4M23.5 12.9v10.2" stroke="#000" stroke-width="1.05" fill="none"/></svg><span class="t" style="left:87px">BGM<u>_</u>Opening<u>_</u>02</span></div>
<div class="tr" style="top:361px"><div class="hd" style="left:51px;top:12px;width:10px"></div><svg style="left:60px;top:1px" width="24" height="24" viewBox="0 0 24 24"><path d="M0.5 -0.0v12.1M0.5 12.2v11.7M1.5 0.1v11.9M1.5 12.3v11.3M2.5 0.9v10.1M2.5 12.3v11.4M3.5 0.1v11.8M3.5 12.5v10.9M4.5 0.3v11.3M4.5 12.0v12.1M5.5 0.7v10.6M5.5 12.0v12.0M6.5 -0.2v12.4M6.5 12.5v10.9M7.5 0.2v11.5M7.5 12.4v11.3M8.5 -0.2v12.4M8.5 12.2v11.7M9.5 -0.1v12.2M9.5 12.6v10.8M10.5 0.3v11.4M10.5 12.3v11.4M11.5 1.1v9.8M11.5 11.8v12.4M12.5 -0.1v12.2M12.5 13.1v9.8M13.5 -0.0v12.1M13.5 12.4v11.3M14.5 0.1v11.8M14.5 12.1v11.7M15.5 1.0v10.1M15.5 12.4v11.2M16.5 -0.2v12.4M16.5 12.6v10.9M17.5 0.8v10.5M17.5 12.9v10.2M18.5 0.8v10.3M18.5 12.1v11.7M19.5 -0.2v12.4M19.5 12.1v11.8M20.5 0.2v11.6M20.5 11.8v12.4M21.5 0.5v10.9M21.5 12.6v10.8M22.5 0.1v11.9M22.5 12.1v11.9M23.5 0.8v10.5M23.5 12.8v10.3" stroke="#000" stroke-width="1.05" fill="none"/></svg><span class="t" style="left:87px">BGM<u>_</u>Saint<u>_</u>Church<u>_</u>02</span></div>
<div class="tr" style="top:385px"><div class="hd" style="left:51px;top:12px;width:10px"></div><svg style="left:60px;top:1px" width="24" height="24" viewBox="0 0 24 24"><path d="M0.5 0.5v11.0M0.5 12.5v10.9M1.5 2.2v7.5M1.5 13.0v10.0M2.5 1.4v9.2M2.5 12.3v11.4M3.5 0.9v10.1M3.5 12.9v10.2M4.5 1.2v9.6M4.5 11.8v12.4M5.5 -0.2v12.4M5.5 13.2v9.6M6.5 -0.1v12.3M6.5 13.6v8.7M7.5 0.7v10.6M7.5 12.0v12.0M8.5 -0.2v12.4M8.5 13.2v9.6M9.5 0.9v10.2M9.5 12.6v10.8M10.5 2.4v7.1M10.5 12.8v10.4M11.5 1.5v8.9M11.5 12.4v11.2M12.5 2.0v7.9M12.5 15.0v6.1M13.5 0.8v10.5M13.5 12.5v11.0M14.5 1.4v9.2M14.5 11.8v12.4M15.5 1.1v9.8M15.5 13.5v9.1M16.5 0.3v11.5M16.5 14.5v6.9M17.5 1.5v8.9M17.5 12.8v10.4M18.5 -0.1v12.3M18.5 13.0v10.0M19.5 0.5v11.1M19.5 13.5v9.0M20.5 0.5v11.1M20.5 11.8v12.4M21.5 1.6v8.9M21.5 11.8v12.4M22.5 1.5v9.0M22.5 12.8v10.4M23.5 0.6v10.8M23.5 11.8v12.4" stroke="#000" stroke-width="1.05" fill="none"/></svg><span class="t" style="left:87px">BGM<u>_</u>Suspense<u>_</u>02</span></div>
<div class="tr" style="top:409px"><div class="hd" style="left:51px;top:12px;width:10px"></div><svg style="left:60px;top:1px" width="24" height="24" viewBox="0 0 24 24"><path d="M0.5 1.0v10.1M0.5 13.3v9.3M1.5 0.1v11.7M1.5 12.0v11.9M2.5 0.1v11.8M2.5 11.8v12.4M3.5 0.3v11.4M3.5 12.3v11.4M4.5 -0.0v12.0M4.5 12.2v11.5M5.5 -0.2v12.4M5.5 13.0v10.1M6.5 0.6v10.9M6.5 14.0v8.1M7.5 0.0v11.9M7.5 12.6v10.9M8.5 -0.0v12.0M8.5 11.8v12.4M9.5 0.4v11.2M9.5 12.5v11.0M10.5 0.6v10.8M10.5 12.8v10.4M11.5 0.7v10.6M11.5 12.1v11.8M12.5 0.4v11.2M12.5 12.4v11.3M13.5 0.5v11.0M13.5 12.0v12.0M14.5 0.2v11.6M14.5 12.5v11.1M15.5 0.1v11.8M15.5 12.5v11.1M16.5 0.9v10.2M16.5 11.8v12.4M17.5 0.2v11.6M17.5 12.8v10.3M18.5 -0.1v12.2M18.5 12.2v11.5M19.5 1.1v9.8M19.5 11.8v12.4M20.5 0.2v11.5M20.5 12.0v12.0M21.5 0.3v11.4M21.5 12.5v11.1M22.5 1.1v9.8M22.5 12.0v12.1M23.5 0.4v11.2M23.5 12.5v10.9" stroke="#000" stroke-width="1.05" fill="none"/></svg><span class="t" style="left:87px">BGM<u>_</u>Suspense<u>_</u>03</span></div>
<div class="tr" style="top:433px"><div class="hd" style="left:28px;top:12px;width:6px"></div><div class="eb p" style="left:17px;top:8px"></div><svg style="left:36px;top:3px" width="20" height="20" viewBox="0 0 20 20"><path d="M2 5Q2 3.500 3.500 3.500L6.500 3Q7.500 1.500 8.800 3L10.500 5Q13.500 5.500 16.500 4.500Q18.200 4 18.200 6V14.500Q18.200 16 16.500 15.800Q12 15.500 8 17.200Q4.500 18.300 3 17.800Q2 17.500 2 16Z" fill="none" stroke="#000" stroke-width="1.700"/></svg><span class="t" style="left:60px">BGS</span></div>
<div class="tr" style="top:457px"><div class="hd" style="left:28px;top:12px;width:6px"></div><div class="eb p" style="left:17px;top:8px"></div><svg style="left:36px;top:3px" width="20" height="20" viewBox="0 0 20 20"><path d="M2 5Q2 3.500 3.500 3.500L6.500 3Q7.500 1.500 8.800 3L10.500 5Q13.500 5.500 16.500 4.500Q18.200 4 18.200 6V14.500Q18.200 16 16.500 15.800Q12 15.500 8 17.200Q4.500 18.300 3 17.800Q2 17.500 2 16Z" fill="none" stroke="#000" stroke-width="1.700"/></svg><span class="t" style="left:60px">Effect</span></div>
<div class="tr" style="top:481px"><div class="hd" style="left:28px;top:12px;width:6px"></div><div class="eb p" style="left:17px;top:8px"></div><svg style="left:36px;top:3px" width="20" height="20" viewBox="0 0 20 20"><path d="M2 5Q2 3.500 3.500 3.500L6.500 3Q7.500 1.500 8.800 3L10.500 5Q13.500 5.500 16.500 4.500Q18.200 4 18.200 6V14.500Q18.200 16 16.500 15.800Q12 15.500 8 17.200Q4.500 18.300 3 17.800Q2 17.500 2 16Z" fill="none" stroke="#000" stroke-width="1.700"/></svg><span class="t" style="left:60px">Event</span></div>
<div class="tr" style="top:505px"><div class="hd" style="left:28px;top:12px;width:6px"></div><div class="eb p" style="left:17px;top:8px"></div><svg style="left:36px;top:3px" width="20" height="20" viewBox="0 0 20 20"><path d="M2 5Q2 3.500 3.500 3.500L6.500 3Q7.500 1.500 8.800 3L10.500 5Q13.500 5.500 16.500 4.500Q18.200 4 18.200 6V14.500Q18.200 16 16.500 15.800Q12 15.500 8 17.200Q4.500 18.300 3 17.800Q2 17.500 2 16Z" fill="none" stroke="#000" stroke-width="1.700"/></svg><span class="t" style="left:60px">SE</span></div>
<div class="tr" style="top:529px"><div class="hd" style="left:28px;top:12px;width:6px"></div><div class="eb p" style="left:17px;top:8px"></div><svg style="left:36px;top:3px" width="20" height="20" viewBox="0 0 20 20"><path d="M2 5Q2 3.500 3.500 3.500L6.500 3Q7.500 1.500 8.800 3L10.500 5Q13.500 5.500 16.500 4.500Q18.200 4 18.200 6V14.500Q18.200 16 16.500 15.800Q12 15.500 8 17.200Q4.500 18.300 3 17.800Q2 17.500 2 16Z" fill="none" stroke="#000" stroke-width="1.700"/></svg><span class="t" style="left:60px">Field</span></div>
<div class="tr" style="top:553px"><div class="hd" style="left:28px;top:12px;width:6px"></div><div class="eb p" style="left:17px;top:8px"></div><svg style="left:36px;top:3px" width="20" height="20" viewBox="0 0 20 20"><path d="M2 5Q2 3.500 3.500 3.500L6.500 3Q7.500 1.500 8.800 3L10.500 5Q13.500 5.500 16.500 4.500Q18.200 4 18.200 6V14.500Q18.200 16 16.500 15.800Q12 15.500 8 17.200Q4.500 18.300 3 17.800Q2 17.500 2 16Z" fill="none" stroke="#000" stroke-width="1.700"/></svg><span class="t" style="left:60px">Battle</span></div>
<div class="tr" style="top:577px"><div class="hd" style="left:24px;top:12px;width:10px"></div><svg style="left:33px;top:1px" width="24" height="24" viewBox="0 0 24 24"><path d="M0.5 1.5v9.0M0.5 13.5v9.0M1.5 3.7v4.6M1.5 15.7v4.6M2.5 5.5v1.0M2.5 17.5v1.0M3.5 5.5v1.0M3.5 17.5v1.0M4.5 5.5v1.0M4.5 17.5v1.0M5.5 5.5v1.0M5.5 17.5v1.0M6.5 5.5v1.0M6.5 17.5v1.0M7.5 5.5v1.0M7.5 17.5v1.0M8.5 5.5v1.0M8.5 17.5v1.0M9.5 5.5v1.0M9.5 17.5v1.0M10.5 5.5v1.0M10.5 17.5v1.0M11.5 5.5v1.0M11.5 17.5v1.0M12.5 5.5v1.0M12.5 17.5v1.0M13.5 5.5v1.0M13.5 17.5v1.0M14.5 5.5v1.0M14.5 17.5v1.0M15.5 5.5v1.0M15.5 17.5v1.0M16.5 5.5v1.0M16.5 17.5v1.0M17.5 5.5v1.0M17.5 17.5v1.0M18.5 5.5v1.0M18.5 17.5v1.0M19.5 5.5v1.0M19.5 17.5v1.0M20.5 5.5v1.0M20.5 17.5v1.0M21.5 5.5v1.0M21.5 17.5v1.0M22.5 5.5v1.0M22.5 17.5v1.0M23.5 5.5v1.0M23.5 17.5v1.0" stroke="#000" stroke-width="1.05" fill="none"/></svg><span class="t" style="left:60px">SE<u>_</u>Cursor<u>_</u>01</span></div>
<div class="tr" style="top:601px"><div class="hd" style="left:28px;top:12px;width:6px"></div><div class="eb p" style="left:17px;top:8px"></div><svg style="left:36px;top:3px" width="20" height="20" viewBox="0 0 20 20"><path d="M2 5Q2 3.500 3.500 3.500L6.500 3Q7.500 1.500 8.800 3L10.500 5Q13.500 5.500 16.500 4.500Q18.200 4 18.200 6V14.500Q18.200 16 16.500 15.800Q12 15.500 8 17.200Q4.500 18.300 3 17.800Q2 17.500 2 16Z" fill="none" stroke="#000" stroke-width="1.700"/></svg><span class="t" style="left:60px">SE<u>_</u>Battle<u>_</u>Magic</span></div>
<div class="tr" style="top:625px"><div class="hd" style="left:28px;top:12px;width:6px"></div><div class="eb p" style="left:17px;top:8px"></div><svg style="left:36px;top:3px" width="20" height="20" viewBox="0 0 20 20"><path d="M2 5Q2 3.500 3.500 3.500L6.500 3Q7.500 1.500 8.800 3L10.500 5Q13.500 5.500 16.500 4.500Q18.200 4 18.200 6V14.500Q18.200 16 16.500 15.800Q12 15.500 8 17.200Q4.500 18.300 3 17.800Q2 17.500 2 16Z" fill="none" stroke="#000" stroke-width="1.700"/></svg><span class="t" style="left:60px">SE<u>_</u>Battle<u>_</u>Physical</span></div>
<div class="tr" style="top:649px"><div class="hd" style="left:28px;top:12px;width:6px"></div><div class="eb p" style="left:17px;top:8px"></div><svg style="left:36px;top:3px" width="20" height="20" viewBox="0 0 20 20"><path d="M2 5Q2 3.500 3.500 3.500L6.500 3Q7.500 1.500 8.800 3L10.500 5Q13.500 5.500 16.500 4.500Q18.200 4 18.200 6V14.500Q18.200 16 16.500 15.800Q12 15.500 8 17.200Q4.500 18.300 3 17.800Q2 17.500 2 16Z" fill="none" stroke="#ff9ccd" stroke-width="1.700"/></svg><span class="t" style="left:60px;color:#e3007f">reserved</span></div>
</div>
<div class="hdr" style="left:176px;top:898px;width:322px;height:22px">#Management Tags + Notes</div>
<div class="abs" style="left:177px;top:921px;width:321px;height:113px;background:#f0f0f0;border:1px solid #fff;border-bottom:1px solid #777;border-top:2px solid #fff"></div>
<div class="abs" style="left:479px;top:922px;width:1px;height:111px;background:#fff"></div>
<svg class="abs" style="left:483px;top:927px" width="10" height="6" viewBox="0 0 10 6"><path d="M0 6L5 0L10 6Z" fill="#a8a8a8"/></svg>
<svg class="abs" style="left:483px;top:1021px" width="10" height="6" viewBox="0 0 10 6"><path d="M0 0L5 6L10 0Z" fill="#a8a8a8"/></svg>
<div class="hdr" style="left:502px;top:34px;width:894px">Waveform Preview<span class="q" style="right:6px">?</span></div>
<div class="tbtn" style="left:506px;top:59.5px;width:117px;height:25px"><svg style="left:7px;top:4px;width:16px;height:16px" viewBox="0 0 16 16"><path d="M1 1L15.500 8L1 15Z" fill="#646464"/></svg><span class="abs" style="left:30px;top:0;line-height:24px;color:#1c1c1c;font-size:13px">Test Play</span></div>
<div class="tbtn" style="left:627px;top:59.5px;width:78px;height:25px"><svg style="left:7px;top:4px;width:16px;height:16px" viewBox="0 0 16 16"><rect x="1" y="1" width="4" height="14" rx="1.500" fill="#646464"/><rect x="9.500" y="1" width="4" height="14" rx="1.500" fill="#646464"/></svg><span class="abs" style="left:30px;top:0;line-height:24px;color:#1c1c1c;font-size:12.8px">Stop</span></div>
<svg class="abs" style="left:502px;top:91px" width="894" height="944" viewBox="0 0 894 944" shape-rendering="crispEdges"><rect width="894" height="944" fill="#becddc"/><path d="M0.5 234V238M1.5 216V258M2.5 222V272M3.5 214V254M4.5 226V248M5.5 230V244M6.5 232V242M7.5 234V240M8.5 236V238M9.5 220V259M10.5 197V280M11.5 147V341M12.5 35V359M13.5 112V318M14.5 122V312M15.5 172V303M16.5 226V246M17.5 129V352M18.5 166V356M19.5 106V407M20.5 174V326M21.5 102V372M22.5 131V341M23.5 209V262M24.5 45V431M25.5 92V434M26.5 83V393M27.5 152V337M28.5 170V356M29.5 132V318M30.5 157V334M31.5 160V314M32.5 167V304M33.5 193V291M34.5 188V294M35.5 187V283M36.5 215V256M37.5 63V346M38.5 154V401M39.5 94V364M40.5 103V362M41.5 118V336M42.5 134V348M43.5 150V306M44.5 188V319M45.5 178V276M46.5 166V313M47.5 168V299M48.5 222V250M49.5 14V366M50.5 73V360M51.5 123V394M52.5 101V365M53.5 121V315M54.5 180V325M55.5 170V317M56.5 169V279M57.5 122V312M58.5 133V340M59.5 73V355M60.5 83V301M61.5 155V356M62.5 123V294M63.5 48V363M64.5 90V379M65.5 49V368M66.5 68V464M67.5 120V353M68.5 169V335M69.5 123V343M70.5 224V248M71.5 37V373M72.5 59V465M73.5 56V351M74.5 78V364M75.5 207V264M76.5 38V395M77.5 114V444M78.5 46V465M79.5 69V399M80.5 82V390M81.5 174V375M82.5 223V249M83.5 80V366M84.5 104V453M85.5 112V356M86.5 158V307M87.5 132V325M88.5 144V283M89.5 162V310M90.5 50V399M91.5 135V429M92.5 128V344M93.5 91V367M94.5 115V353M95.5 127V385M96.5 146V328M97.5 20V356M98.5 116V317M99.5 141V315M100.5 126V357M101.5 148V345M102.5 179V300M103.5 217V255M104.5 5V307M105.5 122V338M106.5 36V291M107.5 159V314M108.5 204V266M109.5 50V458M110.5 86V385M111.5 88V332M112.5 91V379M113.5 164V353M114.5 145V287M115.5 129V341M116.5 219V253M117.5 59V374M118.5 109V303M119.5 90V384M120.5 97V336M121.5 108V352M122.5 139V344M123.5 212V259M124.5 50V387M125.5 99V365M126.5 80V370M127.5 82V352M128.5 101V332M129.5 212V259M130.5 140V368M131.5 59V374M132.5 72V298M133.5 113V363M134.5 174V355M135.5 170V292M136.5 213V258M137.5 56V430M138.5 140V393M139.5 137V376M140.5 117V358M141.5 145V301M142.5 145V331M143.5 217V255M144.5 127V399M145.5 156V300M146.5 165V339M147.5 149V325M148.5 188V288M149.5 63V320M150.5 75V371M151.5 102V323M152.5 122V362M153.5 121V346M154.5 150V436M155.5 158V330M156.5 222V249M157.5 86V399M158.5 76V416M159.5 97V350M160.5 56V349M161.5 129V402M162.5 92V379M163.5 116V334M164.5 137V309M165.5 131V334M166.5 126V312M167.5 191V335M168.5 139V296M169.5 93V334M170.5 119V374M171.5 104V374M172.5 115V369M173.5 166V330M174.5 169V323M175.5 161V343M176.5 225V247M177.5 154V292M178.5 133V339M179.5 165V324M180.5 160V313M181.5 177V329M182.5 220V252M183.5 98V312M184.5 169V359M185.5 158V343M186.5 172V282M187.5 127V381M188.5 160V361M189.5 140V343M190.5 86V424M191.5 65V401M192.5 107V362M193.5 148V351M194.5 141V343M195.5 159V331M196.5 60V412M197.5 117V439M198.5 35V373M199.5 138V368M200.5 86V382M201.5 89V357M202.5 115V410M203.5 111V326M204.5 121V377M205.5 170V368M206.5 131V311M207.5 132V332M208.5 127V311M209.5 212V259M210.5 75V393M211.5 73V368M212.5 116V345M213.5 166V336M214.5 120V291M215.5 127V341M216.5 135V302M217.5 210V260M218.5 158V443M219.5 40V324M220.5 178V386M221.5 133V359M222.5 219V252M223.5 114V330M224.5 115V335M225.5 158V310M226.5 151V277M227.5 24V284M228.5 154V314M229.5 220V251M230.5 137V392M231.5 111V399M232.5 118V335M233.5 154V319M234.5 187V366M235.5 132V358M236.5 140V342M237.5 65V372M238.5 93V347M239.5 83V373M240.5 97V344M241.5 113V301M242.5 208V262M243.5 81V442M244.5 77V378M245.5 55V351M246.5 76V317M247.5 112V362M248.5 169V359M249.5 225V247M250.5 25V448M251.5 104V442M252.5 124V366M253.5 86V383M254.5 102V368M255.5 64V363M256.5 222V250M257.5 106V401M258.5 86V375M259.5 133V317M260.5 12V336M261.5 176V313M262.5 210V260M263.5 83V337M264.5 169V291M265.5 176V316M266.5 179V316M267.5 141V294M268.5 155V318M269.5 142V305M270.5 143V340M271.5 142V337M272.5 176V284M273.5 163V316M274.5 187V308M275.5 182V421M276.5 81V344M277.5 165V367M278.5 90V310M279.5 119V340M280.5 113V304M281.5 182V283M282.5 146V297M283.5 146V306M284.5 149V291M285.5 172V273M286.5 87V349M287.5 214V257M288.5 4V469M289.5 43V372M290.5 68V403M291.5 83V424M292.5 31V369M293.5 168V347M294.5 40V255M295.5 159V307M296.5 144V346M297.5 160V332M298.5 166V314M299.5 176V301M300.5 176V272M301.5 224V248M302.5 39V437M303.5 63V392M304.5 109V380M305.5 151V322M306.5 144V450M307.5 155V323M308.5 181V299M309.5 174V297M310.5 218V253M311.5 122V330M312.5 134V287M313.5 179V333M314.5 157V307M315.5 203V267M316.5 37V428M317.5 69V363M318.5 28V370M319.5 122V318M320.5 224V248M321.5 86V397M322.5 109V354M323.5 117V371M324.5 141V319M325.5 179V348M326.5 108V337M327.5 120V326M328.5 214V257M329.5 34V407M330.5 59V338M331.5 76V378M332.5 101V323M333.5 82V372M334.5 119V364M335.5 41V330M336.5 155V352M337.5 185V311M338.5 139V330M339.5 164V303M340.5 157V301M341.5 155V276M342.5 190V307M343.5 70V443M344.5 133V330M345.5 120V408M346.5 151V398M347.5 85V349M348.5 218V457M349.5 81V301M350.5 110V321M351.5 147V321M352.5 138V332M353.5 153V291M354.5 179V280M355.5 159V280M356.5 214V257M357.5 22V457M358.5 4V395M359.5 84V355M360.5 90V407M361.5 69V416M362.5 206V264M363.5 86V426M364.5 73V418M365.5 35V338M366.5 47V353M367.5 47V376M368.5 215V446M369.5 75V352M370.5 172V364M371.5 77V383M372.5 99V362M373.5 133V336M374.5 128V323M375.5 216V256M376.5 79V389M377.5 108V364M378.5 112V355M379.5 129V288M380.5 187V329M381.5 153V313M382.5 209V262M383.5 57V462M384.5 127V412M385.5 76V374M386.5 112V372M387.5 163V286M388.5 186V303M389.5 192V294M390.5 177V264M391.5 181V295M392.5 202V274M393.5 202V281M394.5 213V283M395.5 210V277M396.5 202V272M397.5 153V303M398.5 195V302M399.5 184V293M400.5 181V289M401.5 190V276M402.5 165V304M403.5 171V298M404.5 187V268M405.5 189V285M406.5 202V269M407.5 207V268M408.5 214V261M409.5 188V293M410.5 193V264M411.5 208V284M412.5 201V279M413.5 208V266M414.5 204V271M415.5 100V302M416.5 177V293M417.5 196V309M418.5 203V279M419.5 179V294M420.5 194V263M421.5 197V293M422.5 189V290M423.5 176V326M424.5 165V330M425.5 204V311M426.5 176V271M427.5 193V291M428.5 195V285M429.5 195V277M430.5 200V270M431.5 202V272M432.5 197V261M433.5 203V264M434.5 199V422M435.5 171V350M436.5 128V347M437.5 130V347M438.5 120V293M439.5 125V332M440.5 179V333M441.5 145V304M442.5 179V308M443.5 86V424M444.5 161V310M445.5 73V312M446.5 164V382M447.5 144V319M448.5 128V352M449.5 123V351M450.5 136V342M451.5 121V323M452.5 147V338M453.5 134V339M454.5 141V293M455.5 21V362M456.5 109V351M457.5 168V314M458.5 109V322M459.5 169V450M460.5 174V320M461.5 183V300M462.5 172V313M463.5 28V436M464.5 47V447M465.5 66V427M466.5 89V397M467.5 91V397M468.5 105V308M469.5 114V360M470.5 162V377M471.5 105V306M472.5 137V311M473.5 80V307M474.5 164V286M475.5 175V298M476.5 48V422M477.5 91V312M478.5 87V380M479.5 114V300M480.5 123V341M481.5 135V336M482.5 126V353M483.5 151V347M484.5 146V298M485.5 154V298M486.5 165V297M487.5 164V317M488.5 171V303M489.5 101V376M490.5 166V324M491.5 148V357M492.5 162V338M493.5 179V339M494.5 146V291M495.5 177V289M496.5 128V349M497.5 154V293M498.5 175V325M499.5 165V292M500.5 160V303M501.5 186V290M502.5 164V282M503.5 60V412M504.5 165V407M505.5 157V444M506.5 123V328M507.5 126V296M508.5 154V363M509.5 99V356M510.5 178V353M511.5 100V386M512.5 102V455M513.5 137V351M514.5 153V308M515.5 55V460M516.5 67V403M517.5 24V414M518.5 90V416M519.5 151V380M520.5 122V369M521.5 176V354M522.5 131V355M523.5 137V348M524.5 101V296M525.5 116V442M526.5 45V456M527.5 128V399M528.5 7V453M529.5 50V426M530.5 84V337M531.5 66V446M532.5 64V336M533.5 147V380M534.5 42V439M535.5 28V421M536.5 82V401M537.5 160V364M538.5 88V349M539.5 74V422M540.5 68V392M541.5 132V366M542.5 41V452M543.5 42V439M544.5 79V330M545.5 58V361M546.5 145V331M547.5 87V366M548.5 95V325M549.5 116V331M550.5 174V354M551.5 129V321M552.5 142V335M553.5 162V322M554.5 160V291M555.5 123V416M556.5 56V402M557.5 150V324M558.5 49V393M559.5 76V386M560.5 144V357M561.5 173V393M562.5 175V314M563.5 154V354M564.5 153V299M565.5 180V333M566.5 68V327M567.5 52V323M568.5 141V364M569.5 69V352M570.5 80V394M571.5 109V384M572.5 102V341M573.5 115V357M574.5 132V331M575.5 159V312M576.5 125V353M577.5 171V317M578.5 161V367M579.5 150V339M580.5 120V368M581.5 151V334M582.5 36V433M583.5 14V351M584.5 32V406M585.5 113V396M586.5 73V320M587.5 143V329M588.5 121V332M589.5 118V335M590.5 151V323M591.5 154V304M592.5 145V346M593.5 56V388M594.5 56V385M595.5 73V365M596.5 123V393M597.5 90V365M598.5 100V393M599.5 131V333M600.5 143V362M601.5 131V340M602.5 140V351M603.5 12V363M604.5 24V366M605.5 36V451M606.5 78V383M607.5 65V407M608.5 41V395M609.5 19V430M610.5 54V375M611.5 49V373M612.5 37V437M613.5 52V416M614.5 74V356M615.5 23V443M616.5 68V427M617.5 142V412M618.5 130V347M619.5 104V343M620.5 116V334M621.5 131V351M622.5 71V410M623.5 85V346M624.5 132V380M625.5 110V362M626.5 58V393M627.5 116V335M628.5 114V349M629.5 97V417M630.5 157V373M631.5 93V333M632.5 106V323M633.5 95V403M634.5 111V360M635.5 160V364M636.5 132V406M637.5 65V386M638.5 111V406M639.5 116V357M640.5 88V389M641.5 132V365M642.5 104V376M643.5 118V324M644.5 121V345M645.5 130V321M646.5 165V333M647.5 175V318M648.5 126V367M649.5 107V342M650.5 138V329M651.5 149V326M652.5 172V293M653.5 166V346M654.5 173V334M655.5 162V418M656.5 104V411M657.5 151V365M658.5 131V377M659.5 47V454M660.5 155V339M661.5 177V331M662.5 90V431M663.5 85V440M664.5 98V337M665.5 140V311M666.5 125V333M667.5 129V358M668.5 126V304M669.5 139V364M670.5 182V342M671.5 185V366M672.5 138V342M673.5 180V297M674.5 180V306M675.5 84V393M676.5 97V383M677.5 137V380M678.5 118V367M679.5 184V368M680.5 137V349M681.5 168V358M682.5 127V437M683.5 101V384M684.5 168V413M685.5 132V392M686.5 102V327M687.5 123V366M688.5 128V382M689.5 149V319M690.5 135V363M691.5 180V349M692.5 149V292M693.5 188V329M694.5 157V297M695.5 166V294M696.5 169V319M697.5 181V311M698.5 182V293M699.5 180V298M700.5 198V292M701.5 110V332M702.5 122V421M703.5 112V311M704.5 159V357M705.5 136V350M706.5 163V375M707.5 186V334M708.5 105V366M709.5 102V414M710.5 106V411M711.5 175V392M712.5 166V377M713.5 163V362M714.5 64V408M715.5 67V461M716.5 144V449M717.5 84V430M718.5 11V413M719.5 129V384M720.5 122V369M721.5 138V378M722.5 139V326M723.5 6V337M724.5 182V337M725.5 130V310M726.5 145V326M727.5 177V351M728.5 124V315M729.5 155V355M730.5 185V355M731.5 147V395M732.5 140V381M733.5 191V359M734.5 127V406M735.5 115V387M736.5 109V302M737.5 34V366M738.5 118V378M739.5 123V439M740.5 136V343M741.5 148V458M742.5 51V456M743.5 57V433M744.5 105V349M745.5 108V422M746.5 118V375M747.5 154V367M748.5 108V401M749.5 127V362M750.5 125V364M751.5 117V406M752.5 116V392M753.5 128V344M754.5 20V363M755.5 59V344M756.5 122V404M757.5 86V400M758.5 141V332M759.5 112V335M760.5 126V349M761.5 146V315M762.5 143V347M763.5 106V380M764.5 126V342M765.5 160V329M766.5 117V362M767.5 168V319M768.5 153V328M769.5 125V357M770.5 118V325M771.5 151V350M772.5 155V314M773.5 148V328M774.5 126V384M775.5 146V344M776.5 147V351M777.5 179V373M778.5 148V360M779.5 172V344M780.5 159V315M781.5 48V394M782.5 76V469M783.5 78V378M784.5 86V448M785.5 112V423M786.5 85V409M787.5 115V409M788.5 121V343M789.5 118V375M790.5 146V359M791.5 161V353M792.5 143V351M793.5 155V297M794.5 38V429M795.5 96V434M796.5 73V361M797.5 91V384M798.5 116V354M799.5 126V350M800.5 224V248M801.5 148V425M802.5 63V399M803.5 107V410M804.5 86V436M805.5 108V386M806.5 96V335M807.5 79V469M808.5 113V323M809.5 140V346M810.5 148V328M811.5 147V319M812.5 131V308M813.5 139V276M814.5 154V320M815.5 164V310M816.5 180V286M817.5 177V307M818.5 178V303M819.5 179V269M820.5 194V294M821.5 187V264M822.5 76V330M823.5 113V403M824.5 118V337M825.5 99V367M826.5 121V354M827.5 184V283M828.5 136V289M829.5 171V458M830.5 164V308M831.5 179V267M832.5 176V289M833.5 228V245M834.5 11V375M835.5 53V413M836.5 145V332M837.5 147V315M838.5 120V300M839.5 144V316M840.5 155V327M841.5 200V280M842.5 101V348M843.5 120V348M844.5 111V391M845.5 157V376M846.5 159V314M847.5 44V464M848.5 42V346M849.5 106V402M850.5 94V360M851.5 96V394M852.5 139V360M853.5 135V366M854.5 138V298M855.5 147V342M856.5 18V320M857.5 163V304M858.5 174V305M859.5 208V305M860.5 188V297M861.5 39V253M862.5 115V414M863.5 171V452M864.5 170V311M865.5 157V308M866.5 224V249M867.5 9V386M868.5 134V310M869.5 120V370M870.5 116V374M871.5 160V349M872.5 157V335M873.5 229V244M874.5 76V326M875.5 152V393M876.5 97V317M877.5 175V347M878.5 187V319M879.5 125V336M880.5 141V333M881.5 199V324M882.5 154V386M883.5 118V359M884.5 98V331M885.5 115V318M886.5 225V248M887.5 144V412M888.5 124V390M889.5 86V339M890.5 134V347M891.5 162V348M892.5 110V335M893.5 226V247" stroke="#000" stroke-width="1" fill="none"/><path d="M0.5 706V710M1.5 688V730M2.5 694V743M3.5 686V726M4.5 698V720M5.5 702V716M6.5 704V713M7.5 706V711M8.5 707V709M9.5 690V723M10.5 674V727M11.5 602V809M12.5 579V854M13.5 586V831M14.5 595V783M15.5 644V808M16.5 626V772M17.5 581V836M18.5 601V835M19.5 628V845M20.5 573V780M21.5 573V848M22.5 580V839M23.5 607V810M24.5 550V818M25.5 544V858M26.5 618V876M27.5 593V847M28.5 634V834M29.5 623V800M30.5 636V791M31.5 636V792M32.5 639V772M33.5 661V762M34.5 661V750M35.5 664V746M36.5 694V722M37.5 535V876M38.5 550V870M39.5 588V844M40.5 609V841M41.5 587V795M42.5 657V820M43.5 639V808M44.5 645V757M45.5 661V790M46.5 650V764M47.5 650V757M48.5 648V766M49.5 549V911M50.5 575V820M51.5 635V862M52.5 643V804M53.5 609V819M54.5 653V768M55.5 659V757M56.5 688V727M57.5 613V782M58.5 626V786M59.5 565V848M60.5 575V793M61.5 571V828M62.5 481V813M63.5 499V923M64.5 535V881M65.5 566V871M66.5 607V834M67.5 567V808M68.5 599V798M69.5 608V809M70.5 685V730M71.5 618V824M72.5 525V827M73.5 579V831M74.5 589V781M75.5 676V739M76.5 568V800M77.5 608V916M78.5 524V893M79.5 578V878M80.5 557V857M81.5 570V787M82.5 626V832M83.5 597V847M84.5 607V822M85.5 577V799M86.5 656V802M87.5 628V778M88.5 627V790M89.5 688V727M90.5 516V915M91.5 540V909M92.5 548V893M93.5 542V880M94.5 604V864M95.5 557V782M96.5 615V847M97.5 604V804M98.5 495V807M99.5 637V805M100.5 481V777M101.5 612V778M102.5 630V769M103.5 685V730M104.5 582V844M105.5 659V804M106.5 630V787M107.5 650V766M108.5 675V739M109.5 527V891M110.5 532V885M111.5 602V868M112.5 608V770M113.5 654V827M114.5 592V802M115.5 609V799M116.5 675V740M117.5 565V884M118.5 544V814M119.5 614V845M120.5 613V800M121.5 579V815M122.5 625V818M123.5 605V810M124.5 531V855M125.5 529V868M126.5 587V836M127.5 583V765M128.5 564V821M129.5 577V755M130.5 577V853M131.5 531V824M132.5 564V779M133.5 596V764M134.5 569V798M135.5 597V813M136.5 689V726M137.5 530V878M138.5 609V876M139.5 571V931M140.5 637V818M141.5 609V822M142.5 623V807M143.5 630V774M144.5 619V834M145.5 655V838M146.5 601V819M147.5 638V804M148.5 632V753M149.5 545V814M150.5 502V919M151.5 595V766M152.5 577V815M153.5 614V820M154.5 659V779M155.5 612V783M156.5 618V768M157.5 572V861M158.5 547V902M159.5 570V901M160.5 609V797M161.5 535V872M162.5 573V832M163.5 505V827M164.5 574V838M165.5 635V808M166.5 624V775M167.5 602V803M168.5 675V740M169.5 633V858M170.5 565V795M171.5 585V789M172.5 584V808M173.5 598V826M174.5 604V807M175.5 646V814M176.5 616V788M177.5 583V818M178.5 618V804M179.5 615V758M180.5 639V785M181.5 618V809M182.5 696V719M183.5 577V797M184.5 622V822M185.5 643V812M186.5 613V804M187.5 594V809M188.5 640V798M189.5 697V719M190.5 592V819M191.5 611V877M192.5 559V868M193.5 594V855M194.5 596V784M195.5 697V718M196.5 537V900M197.5 586V903M198.5 506V892M199.5 625V783M200.5 544V857M201.5 695V721M202.5 551V884M203.5 577V860M204.5 603V844M205.5 608V928M206.5 609V781M207.5 595V844M208.5 621V836M209.5 626V827M210.5 521V858M211.5 574V857M212.5 565V797M213.5 612V931M214.5 590V788M215.5 619V795M216.5 609V768M217.5 686V729M218.5 553V877M219.5 556V819M220.5 566V866M221.5 629V831M222.5 680V735M223.5 607V768M224.5 596V803M225.5 637V797M226.5 610V803M227.5 615V782M228.5 492V773M229.5 694V903M230.5 564V856M231.5 624V823M232.5 586V819M233.5 520V848M234.5 617V771M235.5 623V818M236.5 692V723M237.5 522V895M238.5 567V880M239.5 587V814M240.5 570V848M241.5 581V826M242.5 607V806M243.5 532V924M244.5 511V864M245.5 594V876M246.5 558V866M247.5 573V842M248.5 608V794M249.5 683V732M250.5 545V901M251.5 580V876M252.5 499V828M253.5 523V874M254.5 507V807M255.5 533V845M256.5 599V845M257.5 593V780M258.5 562V851M259.5 568V850M260.5 608V808M261.5 602V831M262.5 631V941M263.5 608V851M264.5 631V809M265.5 610V800M266.5 605V848M267.5 649V766M268.5 608V880M269.5 620V816M270.5 619V762M271.5 634V808M272.5 638V787M273.5 656V783M274.5 659V784M275.5 688V727M276.5 611V842M277.5 601V829M278.5 560V806M279.5 584V808M280.5 589V771M281.5 627V780M282.5 659V779M283.5 621V759M284.5 625V780M285.5 638V753M286.5 615V866M287.5 565V766M288.5 511V898M289.5 499V927M290.5 557V868M291.5 607V807M292.5 562V801M293.5 634V845M294.5 691V724M295.5 605V764M296.5 625V761M297.5 618V752M298.5 632V762M299.5 657V776M300.5 666V748M301.5 693V723M302.5 544V792M303.5 624V872M304.5 602V849M305.5 630V772M306.5 648V793M307.5 633V750M308.5 647V780M309.5 668V769M310.5 680V735M311.5 605V848M312.5 627V814M313.5 648V750M314.5 635V790M315.5 685V730M316.5 613V820M317.5 543V867M318.5 567V823M319.5 591V772M320.5 637V803M321.5 559V834M322.5 569V821M323.5 611V795M324.5 593V765M325.5 602V769M326.5 607V843M327.5 610V796M328.5 688V727M329.5 511V830M330.5 559V854M331.5 580V816M332.5 559V833M333.5 586V909M334.5 584V931M335.5 596V839M336.5 599V936M337.5 662V757M338.5 622V786M339.5 613V785M340.5 666V794M341.5 624V791M342.5 688V727M343.5 551V858M344.5 556V827M345.5 517V873M346.5 592V867M347.5 564V939M348.5 602V846M349.5 563V851M350.5 586V831M351.5 612V800M352.5 597V781M353.5 643V793M354.5 625V784M355.5 631V771M356.5 684V731M357.5 510V927M358.5 477V844M359.5 556V884M360.5 518V892M361.5 564V852M362.5 558V819M363.5 488V884M364.5 491V908M365.5 578V852M366.5 520V918M367.5 547V807M368.5 546V874M369.5 599V839M370.5 608V823M371.5 561V773M372.5 562V822M373.5 637V791M374.5 596V787M375.5 636V766M376.5 620V800M377.5 579V844M378.5 584V817M379.5 608V929M380.5 611V785M381.5 623V793M382.5 686V729M383.5 567V882M384.5 507V797M385.5 567V866M386.5 591V844M387.5 601V795M388.5 672V761M389.5 651V766M390.5 647V749M391.5 680V754M392.5 666V763M393.5 688V758M394.5 663V741M395.5 669V748M396.5 680V729M397.5 633V780M398.5 673V771M399.5 635V771M400.5 662V735M401.5 654V760M402.5 630V758M403.5 643V819M404.5 648V744M405.5 674V744M406.5 662V726M407.5 677V744M408.5 682V726M409.5 677V764M410.5 663V757M411.5 668V737M412.5 679V741M413.5 673V733M414.5 677V729M415.5 669V766M416.5 640V786M417.5 648V749M418.5 646V753M419.5 670V754M420.5 656V768M421.5 662V736M422.5 660V734M423.5 604V822M424.5 622V805M425.5 640V788M426.5 648V738M427.5 659V748M428.5 666V742M429.5 678V741M430.5 671V742M431.5 677V734M432.5 667V732M433.5 675V746M434.5 675V733M435.5 629V800M436.5 590V794M437.5 505V874M438.5 483V809M439.5 634V756M440.5 606V805M441.5 624V787M442.5 650V767M443.5 539V873M444.5 583V857M445.5 579V847M446.5 561V859M447.5 576V817M448.5 601V768M449.5 567V792M450.5 608V772M451.5 614V827M452.5 591V795M453.5 603V788M454.5 613V795M455.5 557V802M456.5 561V784M457.5 594V787M458.5 584V758M459.5 596V764M460.5 648V799M461.5 614V751M462.5 646V785M463.5 507V841M464.5 573V901M465.5 611V868M466.5 555V866M467.5 606V843M468.5 592V819M469.5 626V784M470.5 553V860M471.5 565V772M472.5 602V801M473.5 611V755M474.5 600V797M475.5 627V799M476.5 538V879M477.5 533V874M478.5 590V841M479.5 583V803M480.5 639V795M481.5 622V793M482.5 600V796M483.5 614V821M484.5 621V818M485.5 632V808M486.5 646V762M487.5 635V760M488.5 650V755M489.5 482V842M490.5 634V785M491.5 536V826M492.5 624V817M493.5 629V755M494.5 615V803M495.5 622V764M496.5 633V763M497.5 625V767M498.5 636V775M499.5 633V784M500.5 649V774M501.5 654V756M502.5 648V758M503.5 583V881M504.5 538V880M505.5 595V848M506.5 567V792M507.5 548V820M508.5 550V809M509.5 560V832M510.5 574V805M511.5 576V859M512.5 619V833M513.5 607V770M514.5 647V795M515.5 494V900M516.5 484V908M517.5 575V910M518.5 525V893M519.5 537V829M520.5 553V856M521.5 569V834M522.5 622V826M523.5 547V825M524.5 625V778M525.5 517V903M526.5 500V835M527.5 535V799M528.5 494V916M529.5 530V910M530.5 578V824M531.5 514V899M532.5 606V857M533.5 559V831M534.5 555V909M535.5 584V843M536.5 533V815M537.5 570V862M538.5 518V907M539.5 608V882M540.5 619V819M541.5 615V826M542.5 511V885M543.5 496V904M544.5 523V894M545.5 528V882M546.5 582V815M547.5 552V787M548.5 569V848M549.5 615V832M550.5 608V806M551.5 624V821M552.5 609V811M553.5 618V800M554.5 492V781M555.5 537V885M556.5 594V815M557.5 486V911M558.5 602V887M559.5 556V859M560.5 574V821M561.5 557V856M562.5 571V843M563.5 594V910M564.5 635V787M565.5 548V773M566.5 524V863M567.5 608V805M568.5 632V857M569.5 587V887M570.5 553V822M571.5 594V791M572.5 577V788M573.5 613V801M574.5 619V816M575.5 637V779M576.5 557V880M577.5 578V847M578.5 592V829M579.5 612V837M580.5 628V847M581.5 584V803M582.5 561V930M583.5 486V897M584.5 559V887M585.5 549V867M586.5 606V833M587.5 562V827M588.5 576V814M589.5 635V770M590.5 609V801M591.5 616V794M592.5 604V777M593.5 511V883M594.5 571V858M595.5 570V867M596.5 595V868M597.5 599V807M598.5 625V859M599.5 597V827M600.5 594V828M601.5 598V800M602.5 611V784M603.5 499V912M604.5 520V859M605.5 513V845M606.5 520V849M607.5 532V829M608.5 491V829M609.5 484V846M610.5 510V884M611.5 522V813M612.5 608V900M613.5 592V876M614.5 558V836M615.5 561V805M616.5 512V870M617.5 617V857M618.5 607V864M619.5 621V803M620.5 588V812M621.5 620V794M622.5 574V858M623.5 623V858M624.5 612V843M625.5 524V813M626.5 618V820M627.5 611V804M628.5 573V809M629.5 566V905M630.5 560V796M631.5 569V831M632.5 581V863M633.5 541V886M634.5 599V864M635.5 578V793M636.5 509V892M637.5 497V929M638.5 516V884M639.5 597V894M640.5 607V889M641.5 593V851M642.5 575V839M643.5 613V792M644.5 594V784M645.5 608V807M646.5 645V803M647.5 626V788M648.5 563V868M649.5 573V796M650.5 637V822M651.5 625V783M652.5 648V771M653.5 596V852M654.5 620V784M655.5 621V825M656.5 597V828M657.5 595V839M658.5 601V847M659.5 480V826M660.5 630V774M661.5 642V807M662.5 531V879M663.5 545V806M664.5 598V906M665.5 570V866M666.5 581V864M667.5 620V846M668.5 634V772M669.5 606V781M670.5 613V774M671.5 626V838M672.5 544V790M673.5 655V794M674.5 646V780M675.5 602V890M676.5 641V783M677.5 585V886M678.5 622V900M679.5 630V847M680.5 601V801M681.5 652V799M682.5 597V925M683.5 629V872M684.5 652V913M685.5 596V802M686.5 602V828M687.5 613V772M688.5 585V852M689.5 644V838M690.5 647V832M691.5 609V805M692.5 624V818M693.5 643V790M694.5 629V763M695.5 639V796M696.5 648V769M697.5 645V779M698.5 648V779M699.5 657V762M700.5 662V757M701.5 561V865M702.5 614V864M703.5 571V880M704.5 611V867M705.5 599V857M706.5 598V801M707.5 633V833M708.5 540V853M709.5 572V848M710.5 586V864M711.5 603V804M712.5 608V848M713.5 592V847M714.5 569V898M715.5 516V882M716.5 549V855M717.5 585V886M718.5 630V893M719.5 633V851M720.5 484V832M721.5 601V853M722.5 650V796M723.5 651V801M724.5 655V814M725.5 648V929M726.5 611V818M727.5 638V785M728.5 594V879M729.5 656V856M730.5 657V816M731.5 598V816M732.5 648V816M733.5 629V815M734.5 587V885M735.5 578V863M736.5 582V855M737.5 610V868M738.5 593V822M739.5 635V825M740.5 624V819M741.5 636V780M742.5 574V861M743.5 531V869M744.5 542V892M745.5 561V857M746.5 571V835M747.5 640V811M748.5 583V875M749.5 590V814M750.5 616V852M751.5 514V859M752.5 618V918M753.5 622V781M754.5 630V789M755.5 587V909M756.5 595V862M757.5 550V836M758.5 619V849M759.5 629V822M760.5 619V816M761.5 606V824M762.5 614V824M763.5 566V865M764.5 595V849M765.5 580V844M766.5 589V822M767.5 637V827M768.5 625V816M769.5 570V861M770.5 597V816M771.5 615V803M772.5 619V794M773.5 640V802M774.5 603V856M775.5 612V872M776.5 621V858M777.5 620V842M778.5 632V817M779.5 618V807M780.5 620V814M781.5 516V902M782.5 593V935M783.5 568V913M784.5 534V886M785.5 559V836M786.5 560V823M787.5 570V870M788.5 579V805M789.5 624V814M790.5 596V808M791.5 606V789M792.5 641V785M793.5 619V776M794.5 512V867M795.5 586V890M796.5 609V797M797.5 560V820M798.5 571V836M799.5 584V816M800.5 692V723M801.5 578V900M802.5 532V789M803.5 500V881M804.5 593V812M805.5 581V881M806.5 700V885M807.5 541V771M808.5 638V836M809.5 597V784M810.5 651V771M811.5 590V811M812.5 617V799M813.5 628V778M814.5 671V782M815.5 669V787M816.5 656V776M817.5 652V779M818.5 658V743M819.5 658V757M820.5 657V752M821.5 675V760M822.5 518V904M823.5 543V818M824.5 605V828M825.5 626V815M826.5 658V791M827.5 598V754M828.5 607V806M829.5 654V795M830.5 666V768M831.5 654V781M832.5 653V735M833.5 518V762M834.5 502V908M835.5 520V790M836.5 561V856M837.5 635V803M838.5 587V764M839.5 597V802M840.5 639V764M841.5 699V717M842.5 584V833M843.5 649V802M844.5 624V837M845.5 613V790M846.5 633V810M847.5 526V913M848.5 531V906M849.5 534V855M850.5 560V822M851.5 594V842M852.5 597V816M853.5 693V722M854.5 610V819M855.5 641V774M856.5 624V751M857.5 640V775M858.5 669V782M859.5 650V777M860.5 652V746M861.5 687V739M862.5 577V852M863.5 580V781M864.5 588V842M865.5 629V778M866.5 702V714M867.5 556V844M868.5 602V809M869.5 599V839M870.5 606V829M871.5 654V770M872.5 607V811M873.5 690V725M874.5 613V859M875.5 551V864M876.5 588V848M877.5 609V824M878.5 648V827M879.5 648V773M880.5 609V794M881.5 699V716M882.5 551V839M883.5 585V839M884.5 584V799M885.5 603V847M886.5 702V714M887.5 543V873M888.5 526V889M889.5 590V837M890.5 619V786M891.5 587V853M892.5 597V843M893.5 699V717" stroke="#000" stroke-width="1" fill="none"/></svg>
<style>
#props{position:absolute;left:1400px;top:55px;width:515px;height:980px;background:#adadad}
.pg{position:absolute;left:1px;width:513px}
.gold{background:#c28e00;color:#fff}
.sec{position:absolute;left:1px;width:513px;height:33px;background:#f5efd4}
.sec .in{position:absolute;left:2px;top:2px;width:509px;height:29px;background:#c28e00;color:#fff;line-height:30px}
.sec svg{position:absolute;left:4px;top:8px}
.sec span{position:absolute;left:21px;top:0}
.row{position:absolute;left:1px;width:513px;height:23px;background:#f5efd4;border-bottom:1px solid #a3a3a3;line-height:26px;overflow:hidden;color:#1c1c1c;white-space:nowrap}
.row.dis{background:#e6e6e6;color:#a2a2a2}
.row .l{position:absolute;left:3px;top:0}
.row .v{position:absolute;left:232px;top:0}
.row .d{position:absolute;left:228px;top:0;width:1px;height:22px;background:#a3a3a3}
.row svg{position:absolute;left:497px;top:4px}
</style>
<div class="split" style="left:498px;top:34px;width:4px;height:1001px"></div>
<div class="split" style="left:1396px;top:34px;width:4px;height:1001px"></div>
<div class="hdr" style="left:1400px;top:34px;width:515px">Sound Properties<span class="q" style="right:7px">?</span></div>
<div id="props">
<div class="abs" style="left:0;top:0;width:1px;height:506px;background:#a3a3a3"></div>
<div class="pg gold" style="top:1px;height:22px;line-height:21px;padding-left:5px">Name</div>
<div class="pg" style="top:24px;height:22px;background:#f5efd4;line-height:26px;padding-left:3px;color:#1c1c1c">BGM<u>_</u>Bar<u>_</u>01<svg class="abs" style="left:497px;top:3px" width="15" height="15" viewBox="0 0 15 15"><path d="M8.500 1.500L13.500 6.500L8 12H3.500V7Z" fill="#a0a0a0"/><path d="M4.500 8.500L7 11" stroke="#f5efd4" stroke-width="1"/><rect x="1.500" y="12" width="3" height="2" fill="#a0a0a0"/></svg></div>
<div class="pg" style="top:46px;height:2px;background:#a3a3a3"></div>
<div class="sec" style="top:48px"><div class="in"><svg width="13" height="13" viewBox="0 0 13 13"><circle cx="6.500" cy="6.500" r="6.200" fill="#fff"/><path d="M3.300 5.300L6.500 8.600L9.700 5.300" fill="none" stroke="#c28e00" stroke-width="2"/></svg><span>Basic</span></div></div>
<div class="pg" style="top:81px;height:1px;background:#a3a3a3"></div><div class="row dis" style="top:82px"><span class="l">File Name</span><div class="d"></div><span class="v">BGM<u>_</u>Bar<u>_</u>01.ogg</span></div>
<div class="row dis" style="top:105px"><span class="l">Folder Name</span><div class="d"></div><span class="v">.¥res¥sound</span></div>
<div class="row dis" style="top:128px"><span class="l">Number of Channels</span><div class="d"></div><span class="v">2</span></div>
<div class="row dis" style="top:151px"><span class="l">Sampling Rate</span><div class="d"></div><span class="v">44100</span></div>
<div class="row dis" style="top:174px"><span class="l">Length</span><div class="d"></div><span class="v">00:01:08.45</span></div>
<div class="row" style="top:197px"><span class="l">Type</span><div class="d"></div><span class="v">BGM</span><svg width="13" height="13" viewBox="0 0 13 13"><rect width="13" height="13" rx="1" fill="#a8a8a8"/><path d="M1.500 3.500h10L6.500 8.500Z" fill="#f3f3f3"/></svg></div>
<div class="sec" style="top:220px"><div class="in"><svg width="13" height="13" viewBox="0 0 13 13"><circle cx="6.500" cy="6.500" r="6.200" fill="#fff"/><path d="M3.300 5.300L6.500 8.600L9.700 5.300" fill="none" stroke="#c28e00" stroke-width="2"/></svg><span>Loop</span></div></div>
<div class="pg" style="top:253px;height:1px;background:#a3a3a3"></div><div class="row" style="top:254px"><span class="l">Use Loop</span><div class="d"></div><div class="abs" style="left:232px;top:3px;width:32px;height:16px;border-radius:8px;background:#5f5f5f"><div class="abs" style="left:17px;top:1px;width:14px;height:14px;border-radius:7px;background:#fff"><div class="abs" style="left:6px;top:3px;width:2px;height:8px;background:#5f5f5f"></div></div></div></div>
<div class="row dis" style="top:277px"><span class="l">Start Point</span><div class="d"></div><span class="v">00:00:02.81</span></div>
<div class="row dis" style="top:300px"><span class="l">End Point</span><div class="d"></div><span class="v">00:01:08.45</span></div>
<div class="sec" style="top:323px"><div class="in"><svg width="13" height="13" viewBox="0 0 13 13"><circle cx="6.500" cy="6.500" r="6.200" fill="#fff"/><path d="M3.300 5.300L6.500 8.600L9.700 5.300" fill="none" stroke="#c28e00" stroke-width="2"/></svg><span>Adjustment</span></div></div>
<div class="pg" style="top:356px;height:1px;background:#a3a3a3"></div><div class="row" style="top:357px"><span class="l">Volume</span><div class="d"></div><span class="v">100</span><svg width="13" height="13" viewBox="0 0 13 13"><circle cx="6.500" cy="6.500" r="6.500" fill="#a8a8a8"/><path d="M3.800 5.500L6.500 2.500L9.200 5.500ZM3.800 7.500L6.500 10.500L9.200 7.500Z" fill="#f3f3f3"/></svg></div>
<div class="sec" style="top:380px"><div class="in"><svg width="13" height="13" viewBox="0 0 13 13"><circle cx="6.500" cy="6.500" r="6.200" fill="#fff"/><path d="M3.300 5.300L6.500 8.600L9.700 5.300" fill="none" stroke="#c28e00" stroke-width="2"/></svg><span>3D Sound Settings</span></div></div>
<div class="pg" style="top:413px;height:1px;background:#a3a3a3"></div><div class="row" style="top:414px"><span class="l">Processing Method</span><div class="d"></div><span class="v">Binaural</span><svg width="13" height="13" viewBox="0 0 13 13"><rect width="13" height="13" rx="1" fill="#a8a8a8"/><path d="M1.500 3.500h10L6.500 8.500Z" fill="#f3f3f3"/></svg></div>
<div class="row" style="top:437px"><span class="l">Attenuation Curve</span><div class="d"></div><span class="v">Linear</span><svg width="13" height="13" viewBox="0 0 13 13"><rect width="13" height="13" rx="1" fill="#a8a8a8"/><path d="M1.500 3.500h10L6.500 8.500Z" fill="#f3f3f3"/></svg></div>
<div class="row" style="top:460px"><span class="l">Attenuation Start Distance</span><div class="d"></div><span class="v">1</span><svg width="13" height="13" viewBox="0 0 13 13"><circle cx="6.500" cy="6.500" r="6.500" fill="#a8a8a8"/><path d="M3.800 5.500L6.500 2.500L9.200 5.500ZM3.800 7.500L6.500 10.500L9.200 7.500Z" fill="#f3f3f3"/></svg></div>
<div class="row" style="top:483px"><span class="l">Attenuation End Distance</span><div class="d"></div><span class="v">30</span><svg width="13" height="13" viewBox="0 0 13 13"><circle cx="6.500" cy="6.500" r="6.500" fill="#a8a8a8"/><path d="M3.800 5.500L6.500 2.500L9.200 5.500ZM3.800 7.500L6.500 10.500L9.200 7.500Z" fill="#f3f3f3"/></svg></div>
</div>
<div class="abs" style="left:5px;top:1039px;width:1910px;height:36px;background:#696969;color:#fff;line-height:35px;white-space:nowrap"><span class="abs" style="left:2px;top:0;font-size:12.87px">Manage all materials used in the game, including 3D models, textures, sprites, images, and sounds. 3D stamps and 2D stamps are also created here.</span>
<div class="abs" style="left:1707px;top:6px;width:92px;height:24px;border-radius:5px;background:#b4b4b4;color:#161616;line-height:24px"><div class="abs" style="left:5px;top:3px;width:18px;height:18px;border-radius:2px;background:#5f8de0"><svg width="18" height="18" viewBox="0 0 18 18" fill="none" stroke="#fff" stroke-width="2.200"><path d="M3.500 9.500L7.500 13L14.500 5.500"/></svg></div><span class="abs" style="left:30px;top:1px;font-size:11.8px">OK</span></div>
<div class="abs" style="left:1803px;top:6px;width:101px;height:24px;border-radius:5px;background:#b4b4b4;color:#161616;line-height:24px"><div class="abs" style="left:5px;top:3px;width:18px;height:18px;border-radius:2px;background:#e05c83"><svg width="18" height="18" viewBox="0 0 18 18" fill="none" stroke="#fff" stroke-width="2.200"><path d="M4.500 4.500L13.500 13.500M13.500 4.500L4.500 13.500"/></svg></div><span class="abs" style="left:30px;top:1px;font-size:11.8px">Cancel</span></div>
</div>
<div id="win"></div>
</body></html>
